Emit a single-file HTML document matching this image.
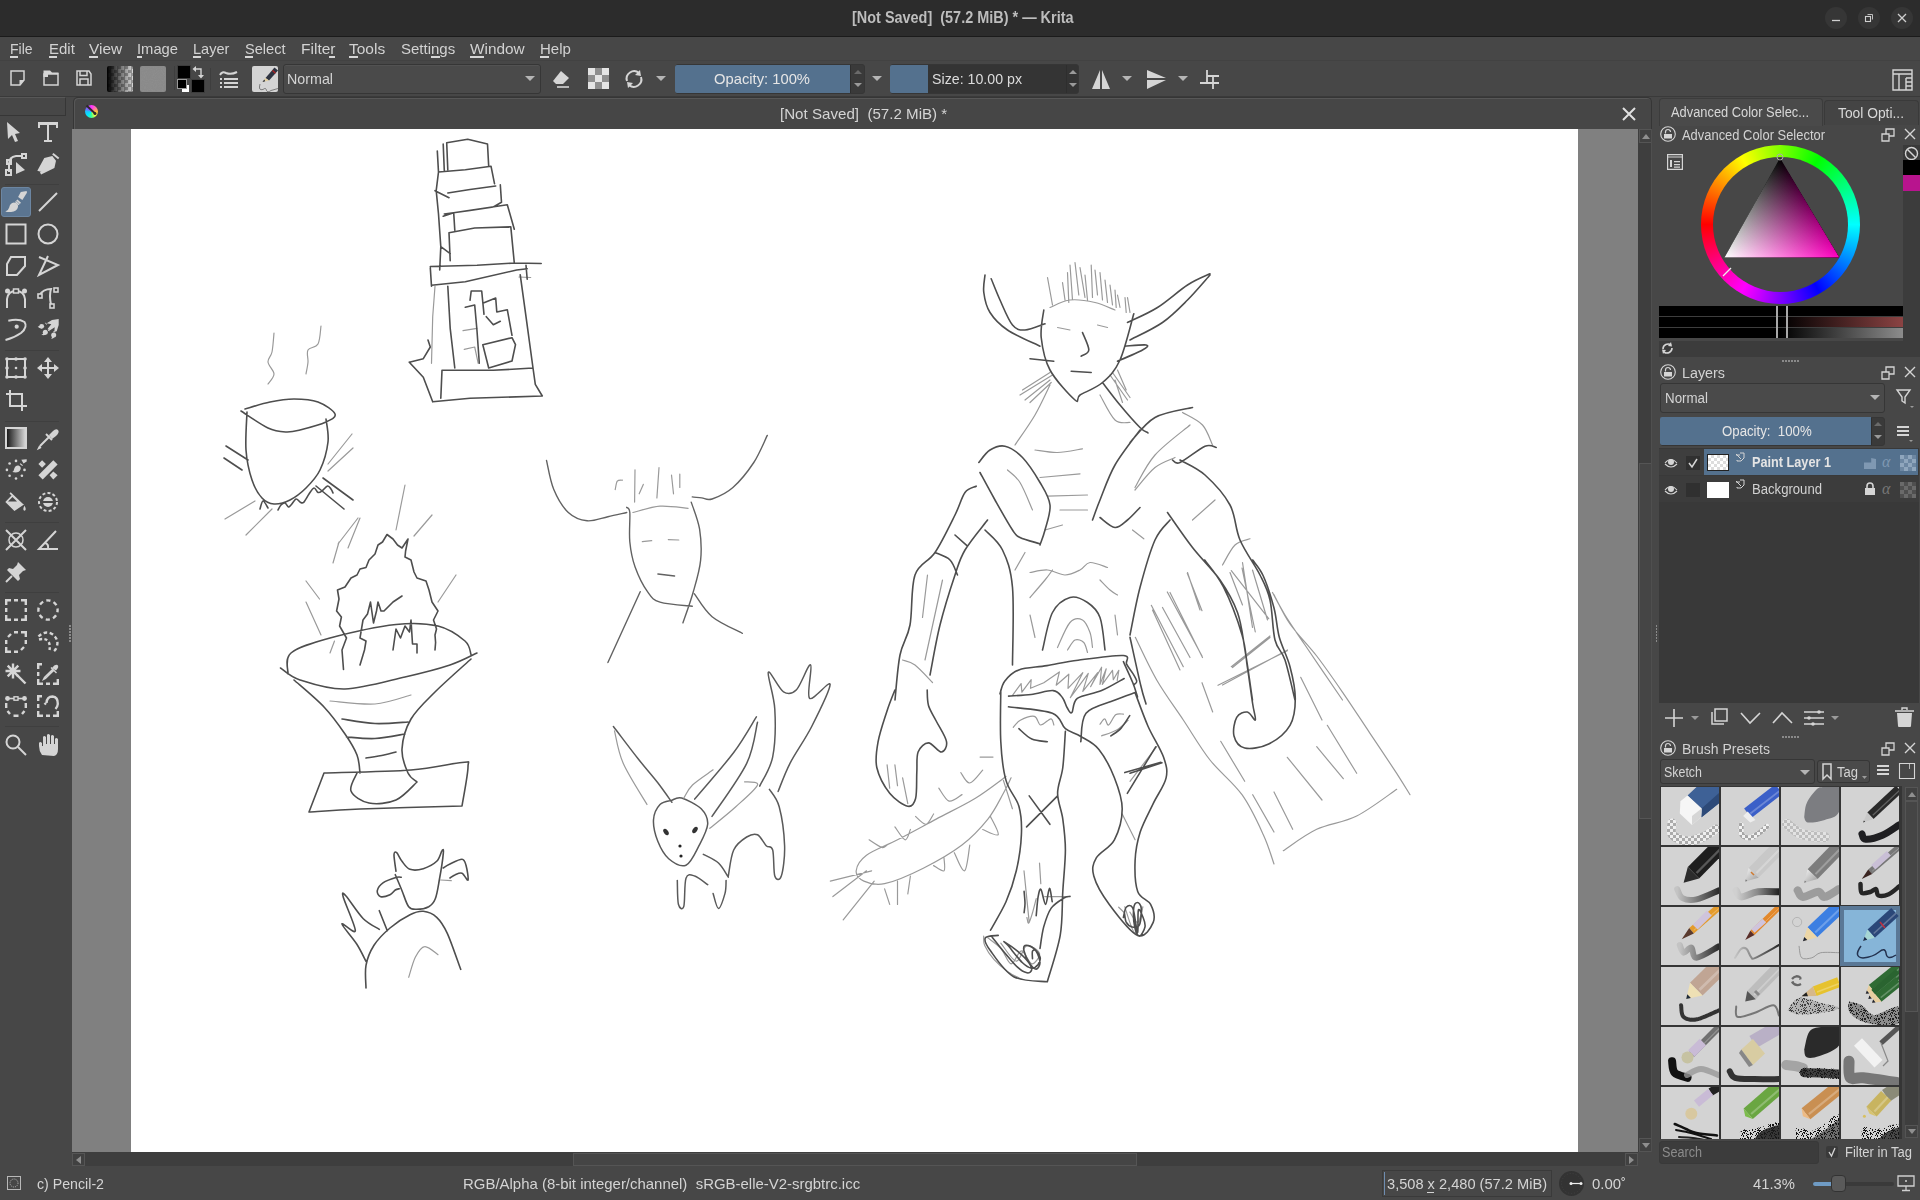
<!DOCTYPE html><html><head><meta charset="utf-8"><style>
*{box-sizing:border-box;margin:0;padding:0}
html,body{width:1920px;height:1200px;overflow:hidden;background:#474747;font-family:"Liberation Sans",sans-serif;color:#d2d2d2}
.a{position:absolute}
svg.a{overflow:visible}
.tx{position:absolute;white-space:nowrap;line-height:1;transform-origin:0 0}
</style></head><body><div class="a" style="left:0px;top:0px;width:1920px;height:36px;background:#2c2c2c;"></div><div class="a" style="left:0px;top:36px;width:1920px;height:1px;background:#1b1b1b;"></div><div class="tx" style="left:851.50px;top:9.66px;font-size:16px;color:#bdbdbd;font-weight:700;transform:scaleX(0.9027);">[Not Saved]&nbsp; (57.2 MiB) * — Krita</div><div class="a" style="left:1825px;top:7px;width:22px;height:22px;border-radius:11px;background:#363636"></div><div class="a" style="left:1858px;top:7px;width:22px;height:22px;border-radius:11px;background:#363636"></div><div class="a" style="left:1891px;top:7px;width:22px;height:22px;border-radius:11px;background:#363636"></div><svg class="a" style="left:1828px;top:10px" width="16" height="16" viewBox="0 0 16 16"><path stroke="#cfcfcf" stroke-width="1.3" d="M4 10.5 H12"/></svg><svg class="a" style="left:1861px;top:10px" width="16" height="16" viewBox="0 0 16 16"><rect x="4.5" y="6.5" width="5" height="5" fill="none" stroke="#cfcfcf" stroke-width="1.1"/><path fill="none" stroke="#cfcfcf" stroke-width="0.9" d="M6.5 4.5 H11.5 V9.5"/></svg><svg class="a" style="left:1894px;top:10px" width="16" height="16" viewBox="0 0 16 16"><path stroke="#cfcfcf" stroke-width="1.3" d="M4 4 L12 12 M12 4 L4 12"/></svg><div class="tx" style="left:10.40px;top:42.36px;font-size:14.1px;color:#d2d2d2;font-weight:400;transform:scaleX(0.9948);">File</div><div class="a" style="left:10.4px;top:56px;width:8.1px;height:2px;background:#d6d6d6;"></div><div class="tx" style="left:48.70px;top:42.36px;font-size:14.1px;color:#d2d2d2;font-weight:400;transform:scaleX(1.0619);">Edit</div><div class="a" style="left:48.5px;top:56px;width:8.0px;height:2px;background:#d6d6d6;"></div><div class="tx" style="left:88.90px;top:42.36px;font-size:14.1px;color:#d2d2d2;font-weight:400;transform:scaleX(1.0958);">View</div><div class="a" style="left:88.9px;top:56px;width:8.899999999999991px;height:2px;background:#d6d6d6;"></div><div class="tx" style="left:137.10px;top:42.36px;font-size:14.1px;color:#d2d2d2;font-weight:400;transform:scaleX(1.0467);">Image</div><div class="a" style="left:137px;top:56px;width:4.5px;height:2px;background:#d6d6d6;"></div><div class="tx" style="left:193.10px;top:42.36px;font-size:14.1px;color:#d2d2d2;font-weight:400;transform:scaleX(1.0322);">Layer</div><div class="a" style="left:193px;top:56px;width:7.5px;height:2px;background:#d6d6d6;"></div><div class="tx" style="left:244.50px;top:42.36px;font-size:14.1px;color:#d2d2d2;font-weight:400;transform:scaleX(1.0365);">Select</div><div class="a" style="left:244.5px;top:56px;width:8.0px;height:2px;background:#d6d6d6;"></div><div class="tx" style="left:300.50px;top:42.36px;font-size:14.1px;color:#d2d2d2;font-weight:400;transform:scaleX(1.1012);">Filter</div><div class="a" style="left:329px;top:56px;width:6px;height:2px;background:#d6d6d6;"></div><div class="tx" style="left:349.30px;top:42.36px;font-size:14.1px;color:#d2d2d2;font-weight:400;transform:scaleX(1.1001);">Tools</div><div class="a" style="left:349px;top:56px;width:9px;height:2px;background:#d6d6d6;"></div><div class="tx" style="left:400.80px;top:42.36px;font-size:14.1px;color:#d2d2d2;font-weight:400;transform:scaleX(1.0640);">Settings</div><div class="a" style="left:431.4px;top:56px;width:8.600000000000023px;height:2px;background:#d6d6d6;"></div><div class="tx" style="left:470.40px;top:42.36px;font-size:14.1px;color:#d2d2d2;font-weight:400;transform:scaleX(1.0909);">Window</div><div class="a" style="left:470.4px;top:56px;width:14.100000000000023px;height:2px;background:#d6d6d6;"></div><div class="tx" style="left:540.10px;top:42.36px;font-size:14.1px;color:#d2d2d2;font-weight:400;transform:scaleX(1.0655);">Help</div><div class="a" style="left:540px;top:56px;width:9px;height:2px;background:#d6d6d6;"></div><div class="a" style="left:0px;top:60px;width:1920px;height:1px;background:#424242;"></div><div class="a" style="left:0px;top:96px;width:1920px;height:1px;background:#3a3a3a;"></div><svg class="a" style="left:10px;top:70px" width="16" height="16" viewBox="0 0 16 16"><path fill="none" stroke="#d5d5d5" stroke-width="1.5" d="M1 1 H14 V10 L10 15 H1 Z"/><path fill="#d5d5d5" d="M9.5 15 L14.5 10 H9.5 Z"/></svg><svg class="a" style="left:43px;top:70px" width="16" height="16" viewBox="0 0 16 16"><path fill="none" stroke="#d5d5d5" stroke-width="1.5" d="M1 4 H15 V15 H1 Z"/><path fill="#d5d5d5" d="M0.5 0.5 H7 L9 2.5 H15.5 V4 H5 V7 H0.5 Z"/></svg><svg class="a" style="left:76px;top:70px" width="16" height="16" viewBox="0 0 16 16"><path fill="none" stroke="#d5d5d5" stroke-width="1.5" d="M1 1 H13 L15 4 V15 H1 Z M4 1 V5.5 H11 V1 M4 15 V9 H12 V15"/></svg><div class="a" style="left:107px;top:66px;width:26px;height:26px;border-radius:2px;background:linear-gradient(90deg,#000 0%,rgba(0,0,0,0) 100%),repeating-conic-gradient(#9a9a9a 0 25%,#d8d8d8 0 50%) 0 0/7px 7px"></div><div class="a" style="left:140px;top:66px;width:26px;height:26px;background:#8a8a8a;border-radius:2px"></div><svg class="a" style="left:140px;top:66px" width="26" height="26" viewBox="0 0 26 26"><defs><filter id="nz" x="0" y="0" width="100%" height="100%" color-interpolation-filters="sRGB"><feTurbulence type="fractalNoise" baseFrequency="0.9" numOctaves="2" seed="3"/><feColorMatrix values="0 0 0 0 0.6  0 0 0 0 0.6  0 0 0 0 0.6  1.0 0 0 0 -0.4"/></filter></defs><rect x="1" y="1" width="24" height="24" fill="#8a8a8a" filter="url(#nz)" opacity="0.7"/></svg><div class="a" style="left:174px;top:66px;width:1px;height:24px;background:#3e3e3e;"></div><div class="a" style="left:178px;top:66px;width:12px;height:12px;background:#000;box-shadow:0 0 0 1px #3c3c3c"></div><div class="a" style="left:192px;top:80px;width:12px;height:12px;background:#000;box-shadow:0 0 0 1px #3c3c3c"></div><div class="a" style="left:182px;top:85px;width:7px;height:7px;background:#fff;"></div><div class="a" style="left:178px;top:80px;width:8px;height:8px;background:#000;box-shadow:0 0 0 1px #9a9a9a"></div><svg class="a" style="left:192px;top:66px" width="12" height="13" viewBox="0 0 12 13"><path fill="none" stroke="#d5d5d5" stroke-width="1.4" d="M3 3 H9 V10"/><path fill="#d5d5d5" d="M0.5 3 L4 0 V6 Z M9 12.5 L6 9 H12 Z"/></svg><div class="a" style="left:210px;top:68px;width:1px;height:22px;background:#3e3e3e;"></div><svg class="a" style="left:219px;top:70px" width="20" height="20" viewBox="0 0 20 20"><path fill="none" stroke="#d5d5d5" stroke-width="2" d="M1 5 Q3 1 7 3 Q12 5 18 2"/><g fill="#d5d5d5"><rect x="1" y="8" width="2" height="2"/><rect x="5" y="8" width="14" height="2"/><rect x="1" y="12" width="2" height="2"/><rect x="5" y="12" width="14" height="2"/><rect x="1" y="16" width="2" height="2"/><rect x="5" y="16" width="14" height="2"/></g></svg><div class="a" style="left:252px;top:66px;width:26px;height:26px;border-radius:2px;background:#d4d4d4"></div><svg class="a" style="left:252px;top:66px" width="26" height="26" viewBox="0 0 26 26"><path d="M13.5 12 L22.5 1.5 L26 4.5 L17 14.5 Z" fill="#2f3441"/><path d="M13.5 12 L17 14.5 L10.5 16 Z" fill="#e2cfa0"/><path d="M10.5 16 L12.2 13.6 L13.2 15.3 Z" fill="#1d2333"/><path d="M20.5 4.5 L23.5 7.2" stroke="#b52020" stroke-width="1.2"/><path d="M8 18 Q6 25 11 23.5 Q14 21 14.5 24.5 Q15.5 27 19 24.5 L26 22.5" fill="none" stroke="#555" stroke-width="0.7"/></svg><div class="a" style="left:283px;top:64px;width:258px;height:30px;border-radius:3px;background:#4a4a4a;border:1px solid #363636;box-shadow:inset 0 1px 0 #525252"></div><div class="tx" style="left:287.00px;top:72.40px;font-size:14.3px;color:#d4d4d4;font-weight:400;transform:scaleX(0.9983);">Normal</div><svg class="a" style="left:525px;top:76px" width="10" height="6" viewBox="0 0 10 6"><path fill="#b5b5b5" d="M0 0 H10 L5 5 Z"/></svg><svg class="a" style="left:552px;top:70px" width="18" height="18" viewBox="0 0 18 18"><path fill="#d5d5d5" d="M9 1 L17 8 L11 14 L4 14 L1 11 Z"/><path fill="#474747" d="M3 11 L8 6 L11 9 L8 12 L5 12 Z" opacity="0"/><path stroke="#d5d5d5" stroke-width="1.6" d="M5 17 H17"/></svg><div class="a" style="left:588px;top:68px;width:21px;height:21px;background:repeating-conic-gradient(#8e8e8e 0 25%,#e4e4e4 0 50%) 0 0/14px 14px"></div><svg class="a" style="left:624px;top:69px" width="20" height="20" viewBox="0 0 20 20"><path fill="none" stroke="#d5d5d5" stroke-width="2" d="M3 12 A7.5 7.5 0 0 1 15 4 M17 8 A7.5 7.5 0 0 1 5 16"/><path fill="#d5d5d5" d="M16 1 L17 7 L11 6 Z M4 19 L3 13 L9 14 Z"/></svg><svg class="a" style="left:656px;top:76px" width="10" height="6" viewBox="0 0 10 6"><path fill="#b5b5b5" d="M0 0 H10 L5 5 Z"/></svg><div class="a" style="left:675px;top:64px;width:190px;height:30px;border-radius:3px;background:#3a3a3a;border:1px solid #363636"></div><div class="a" style="left:675px;top:65px;width:175px;height:28px;background:#54718e;border-radius:2px 0 0 2px"></div><div class="a" style="left:850px;top:65px;width:1px;height:28px;background:#2e2e2e;"></div><svg class="a" style="left:853px;top:69px" width="10" height="20" viewBox="0 0 10 20"><path fill="#6a6a6a" d="M1 5 L5 1 L9 5 Z"/><path fill="#9a9a9a" d="M1 14 L5 18 L9 14 Z"/></svg><div class="tx" style="left:714.00px;top:72.40px;font-size:14.3px;color:#e6e6e6;font-weight:400;transform:scaleX(1.0324);">Opacity: 100%</div><svg class="a" style="left:872px;top:76px" width="10" height="6" viewBox="0 0 10 6"><path fill="#b5b5b5" d="M0 0 H10 L5 5 Z"/></svg><div class="a" style="left:890px;top:64px;width:189px;height:30px;border-radius:3px;background:#343434;border:1px solid #363636"></div><div class="a" style="left:890px;top:65px;width:38px;height:28px;background:#54718e;border-radius:2px 0 0 2px"></div><div class="a" style="left:1066px;top:65px;width:1px;height:28px;background:#2e2e2e;"></div><svg class="a" style="left:1068px;top:69px" width="10" height="20" viewBox="0 0 10 20"><path fill="#9a9a9a" d="M1 5 L5 1 L9 5 Z"/><path fill="#9a9a9a" d="M1 14 L5 18 L9 14 Z"/></svg><div class="tx" style="left:932.00px;top:72.40px;font-size:14.3px;color:#dcdcdc;font-weight:400;transform:scaleX(0.9933);">Size: 10.00 px</div><svg class="a" style="left:1091px;top:69px" width="20" height="21" viewBox="0 0 20 21"><path fill="#d5d5d5" d="M9 1 V20 H1 Z M11 1 V20 H19 Z"/></svg><svg class="a" style="left:1122px;top:76px" width="10" height="6" viewBox="0 0 10 6"><path fill="#b5b5b5" d="M0 0 H10 L5 5 Z"/></svg><svg class="a" style="left:1146px;top:69px" width="21" height="21" viewBox="0 0 21 21"><path fill="#d5d5d5" d="M1 1 L20 9 H1 Z M1 11 H20 L1 20 Z"/></svg><svg class="a" style="left:1178px;top:76px" width="10" height="6" viewBox="0 0 10 6"><path fill="#b5b5b5" d="M0 0 H10 L5 5 Z"/></svg><svg class="a" style="left:1199px;top:69px" width="21" height="21" viewBox="0 0 21 21"><path fill="none" stroke="#d5d5d5" stroke-width="1.8" d="M1 14 H20 M8 1 V14 M8 7 H20 V7 M14 7 V20"/></svg><svg class="a" style="left:1892px;top:69px" width="21" height="22" viewBox="0 0 21 22"><path fill="none" stroke="#d5d5d5" stroke-width="1.4" d="M1 1 H20 V21 H1 Z M1 5 H20 M7 5 V21 M14 9 H20 M14 13 H20 M14 17 H20 M14 9 V21"/></svg><div class="a" style="left:0px;top:97px;width:66px;height:19px;background:#474747;border:1px solid #363636;border-left:none;border-top-color:#575757"></div><div class="a" style="left:1px;top:187px;width:30px;height:30px;background:#5b7591;border-radius:3px;border:1px solid #6c86a2"></div><svg class="a" style="left:5px;top:121px" width="22" height="22" viewBox="0 0 22 22"><path fill="#d5d5d5" d="M2 1 L15 12 L10 13 L13 20 L10 21 L7 14 L3 18 Z"/></svg><svg class="a" style="left:37px;top:121px" width="22" height="22" viewBox="0 0 22 22"><path fill="#d5d5d5" d="M1 1 H21 V7 H19 V4 H12 V19 H15 V21 H7 V19 H10 V4 H3 V7 H1 Z"/></svg><svg class="a" style="left:5px;top:153px" width="22" height="22" viewBox="0 0 22 22"><path fill="none" stroke="#d5d5d5" stroke-width="2" d="M4 19 V11 Q4 4 11 3 H17" /><rect x="1" y="17" width="5" height="5" fill="none" stroke="#d5d5d5" stroke-width="2" stroke-width="1.6"/><rect x="2" y="7" width="4" height="4" fill="none" stroke="#d5d5d5" stroke-width="2" stroke-width="1.6"/><rect x="17" y="1" width="4" height="4" fill="none" stroke="#d5d5d5" stroke-width="2" stroke-width="1.6"/><path fill="#d5d5d5" d="M11 9 L20 17 L11 21 Z"/></svg><svg class="a" style="left:37px;top:153px" width="22" height="22" viewBox="0 0 22 22"><path fill="#d5d5d5" d="M0.3 17.8 L7.3 5 L15.3 2.9 L19 7.7 L17.4 15.1 L4.1 21.5 L3 19.5 L9.2 12.6 Q8 11 9.9 9.8 Q11.6 10.6 10.8 12.5 L4.5 19 Z"/><path fill="none" stroke="#d5d5d5" stroke-width="2" d="M15.8 0.7 L21.7 5.5"/></svg><svg class="a" style="left:5px;top:191px" width="22" height="22" viewBox="0 0 22 22"><path fill="#d5d5d5" d="M13.1 5.9 L15.8 1.1 L21.7 0.1 L21.9 1.7 L17.4 9.1 Z"/><path fill="#d5d5d5" d="M11.2 9.6 L12.4 8.4 L16 11.8 L14.8 13 Z M10 11 L11 10 L14.5 13.3 L13.5 14.3 Z"/><path fill="#d5d5d5" d="M0.3 20.5 Q3.5 19.5 4.2 16.5 Q5 12 9 11.5 Q13.5 11.8 13 16 Q12 20.5 6 21 Q2.5 21.3 0.3 20.5 Z"/></svg><svg class="a" style="left:37px;top:191px" width="22" height="22" viewBox="0 0 22 22"><path fill="none" stroke="#d5d5d5" stroke-width="2" d="M2 20 L20 2"/></svg><svg class="a" style="left:5px;top:223px" width="22" height="22" viewBox="0 0 22 22"><rect x="1.5" y="1.5" width="19" height="19" fill="none" stroke="#d5d5d5" stroke-width="2"/></svg><svg class="a" style="left:37px;top:223px" width="22" height="22" viewBox="0 0 22 22"><circle cx="11" cy="11" r="9.5" fill="none" stroke="#d5d5d5" stroke-width="2"/></svg><svg class="a" style="left:5px;top:255px" width="22" height="22" viewBox="0 0 22 22"><path fill="none" stroke="#d5d5d5" stroke-width="2" d="M6 2 H20 V11 L12 20 H2 V9 Z"/></svg><svg class="a" style="left:37px;top:255px" width="22" height="22" viewBox="0 0 22 22"><path fill="none" stroke="#d5d5d5" stroke-width="2" d="M2 2 L21 10 L2 20 L11 1"/></svg><svg class="a" style="left:5px;top:287px" width="22" height="22" viewBox="0 0 22 22"><path fill="none" stroke="#d5d5d5" stroke-width="2" d="M2 21 V12 Q3 4 11 4 Q19 4 20 12 V21"/><circle cx="2.5" cy="4" r="2.5" fill="#d5d5d5"/><circle cx="19.5" cy="4" r="2.5" fill="#d5d5d5"/><rect x="8.5" y="2" width="5" height="4" fill="#474747" stroke="#d5d5d5" stroke-width="1.5"/></svg><svg class="a" style="left:37px;top:287px" width="22" height="22" viewBox="0 0 22 22"><path fill="none" stroke="#d5d5d5" stroke-width="2" d="M3 8 Q6 2 14 2 Q12 8 14 18"/><rect x="1" y="7" width="4" height="4" fill="#474747" stroke="#d5d5d5" stroke-width="1.6"/><rect x="17" y="1" width="4" height="4" fill="#474747" stroke="#d5d5d5" stroke-width="1.6"/><rect x="13" y="17" width="4" height="4" fill="#474747" stroke="#d5d5d5" stroke-width="1.6"/></svg><svg class="a" style="left:5px;top:319px" width="22" height="22" viewBox="0 0 22 22"><path fill="none" stroke="#d5d5d5" stroke-width="2" stroke-width="2.2" d="M3.3 1.7 Q14 -0.5 19.5 3 Q23 8 16 14 Q9 19 0.5 21"/><circle cx="11.7" cy="7.7" r="2.1" fill="#d5d5d5"/></svg><svg class="a" style="left:37px;top:319px" width="22" height="22" viewBox="0 0 22 22"><path fill="#d5d5d5" d="M21.7 0 L15 1 L9.7 4.3 L14.3 5.3 L10.7 9.7 L12.3 11.7 L17.7 8.3 L17.3 12.7 L19.7 12.3 L21.7 6 Z"/><circle cx="4.7" cy="7.3" r="2.4" fill="#d5d5d5"/><path fill="#d5d5d5" d="M0.7 7.7 Q3 7 4 5.5 L5 9.5 Q2 9.5 0.7 7.7 Z"/><circle cx="8.3" cy="13.3" r="2.5" fill="#d5d5d5"/><path fill="#d5d5d5" d="M4.3 15.7 Q6.5 15 7 12.5 L9 15.5 Q6.5 16.7 4.3 15.7 Z"/><circle cx="16.7" cy="15.9" r="2.5" fill="#d5d5d5"/><path fill="#d5d5d5" d="M14.3 19.9 Q15.5 17.5 14.5 15.5 L17.5 18 Q16.5 19.8 14.3 19.9 Z"/><path stroke="#d5d5d5" stroke-width="1" d="M8.5 3.8 L9.5 5.5 M11 10.8 L12.3 12.2 M16.3 12.8 L18.3 12.8"/></svg><svg class="a" style="left:5px;top:357px" width="22" height="22" viewBox="0 0 22 22"><rect x="2" y="2" width="18" height="18" fill="none" stroke="#d5d5d5" stroke-width="2"/><circle cx="11" cy="11" r="1.3" fill="#d5d5d5"/><g fill="#d5d5d5"><circle cx="2" cy="2" r="1.8"/><circle cx="11" cy="2" r="1.8"/><circle cx="20" cy="2" r="1.8"/><circle cx="2" cy="11" r="1.8"/><circle cx="20" cy="11" r="1.8"/><circle cx="2" cy="20" r="1.8"/><circle cx="11" cy="20" r="1.8"/><circle cx="20" cy="20" r="1.8"/></g></svg><svg class="a" style="left:37px;top:357px" width="22" height="22" viewBox="0 0 22 22"><path fill="none" stroke="#d5d5d5" stroke-width="2" d="M11 2 V20 M2 11 H20"/><path fill="#d5d5d5" d="M11 0 L15 5 H7 Z M11 22 L15 17 H7 Z M0 11 L5 7 V15 Z M22 11 L17 7 V15 Z"/></svg><svg class="a" style="left:5px;top:389px" width="22" height="22" viewBox="0 0 22 22"><path fill="none" stroke="#d5d5d5" stroke-width="2" d="M5 1 V17 H22 M1 5 H17 V22"/></svg><svg class="a" style="left:5px;top:427px" width="22" height="22" viewBox="0 0 22 22"><defs><linearGradient id="gr1"><stop offset="0" stop-color="#111"/><stop offset="1" stop-color="#ddd"/></linearGradient></defs><rect x="1" y="1" width="20" height="20" fill="url(#gr1)" stroke="#d5d5d5" stroke-width="2"/></svg><svg class="a" style="left:37px;top:427px" width="22" height="22" viewBox="0 0 22 22"><path fill="none" stroke="#d5d5d5" stroke-width="2" d="M3 19 L13 9 M9 7 L15 13"/><path fill="#d5d5d5" d="M12 8 L16 4 Q19 1 21 3 Q23 5 19 9 L15 12 Z"/><path fill="none" stroke="#d5d5d5" stroke-width="2" stroke-width="1.6" d="M3 19 L2 21 L4 20"/></svg><svg class="a" style="left:5px;top:459px" width="22" height="22" viewBox="0 0 22 22"><path fill="#d5d5d5" d="M16.3 0.8 L21.7 0.3 L21.7 2.4 L18.5 4.5 Z M14.7 5 L15.5 4.2 L18 6.2 L17.2 7 Z"/><path fill="#d5d5d5" d="M7.3 13 Q9 12 9.3 9.5 Q10.5 6 13.5 6.5 Q16.5 7.5 15.5 10.5 Q14.5 13.5 10.5 13.5 Z"/><g fill="#d5d5d5"><circle cx="11" cy="1.9" r="1.3"/><circle cx="4.6" cy="4.5" r="1.3"/><circle cx="1.9" cy="10.9" r="1.3"/><circle cx="4.6" cy="16.8" r="1.3"/><circle cx="11" cy="19.5" r="1.3"/><circle cx="16.9" cy="16.8" r="1.3"/><circle cx="19.5" cy="10.9" r="1.3"/></g></svg><svg class="a" style="left:37px;top:459px" width="22" height="22" viewBox="0 0 22 22"><path fill="#d5d5d5" d="M1.4 16.3 L5.7 20.5 L20.6 5.6 L16.3 1.3 Z M1.4 5.1 L5.1 1.3 L8.9 5.1 L5.1 8.8 Z M12.6 16.3 L16.3 12.5 L20.6 16.3 L16.3 20.5 Z"/></svg><svg class="a" style="left:5px;top:491px" width="22" height="22" viewBox="0 0 22 22"><path fill="#d5d5d5" d="M0.3 10.9 L9.4 20 L19 13.6 L17.5 12.5 L5.7 1.3 L4.5 2.5 L6.5 4.5 Z"/><path fill="#474747" d="M3 10.5 L12 10.5 L7.5 6 Z"/><path fill="#d5d5d5" d="M19.5 14.5 Q21 17.5 20.5 19 Q19.5 20.5 18.5 19 Q18 17.5 19.5 14.5 Z"/></svg><svg class="a" style="left:37px;top:491px" width="22" height="22" viewBox="0 0 22 22"><circle cx="11" cy="11" r="9" fill="none" stroke="#d5d5d5" stroke-width="2" stroke-dasharray="3 2.2"/><circle cx="11" cy="11" r="5" fill="#d5d5d5"/><rect x="6" y="10" width="10" height="2" fill="#474747"/></svg><svg class="a" style="left:5px;top:529px" width="22" height="22" viewBox="0 0 22 22"><path fill="none" stroke="#d5d5d5" stroke-width="2" d="M1 1 L21 21 M21 1 L1 21"/><circle cx="11" cy="11" r="7" fill="none" stroke="#d5d5d5" stroke-width="1.5"/></svg><svg class="a" style="left:37px;top:529px" width="22" height="22" viewBox="0 0 22 22"><path fill="none" stroke="#d5d5d5" stroke-width="2" d="M19 2 L2 20 H21"/><path fill="none" stroke="#d5d5d5" stroke-width="2" stroke-width="1.5" d="M8 14 Q12 15 11 20"/></svg><svg class="a" style="left:5px;top:561px" width="22" height="22" viewBox="0 0 22 22"><path fill="#d5d5d5" d="M13 1 L21 9 L18 10 L14 14 L15 18 L13 20 L2 9 L4 7 L8 8 L12 4 Z"/><path fill="none" stroke="#d5d5d5" stroke-width="2" d="M7 15 L1 21"/></svg><svg class="a" style="left:5px;top:599px" width="22" height="22" viewBox="0 0 22 22"><path fill="none" stroke="#d5d5d5" stroke-width="2.4" d="M1.2 6 V1.2 H6 M16 1.2 H20.8 V6 M1.2 16 V20.8 H6 M20.8 16 V20.8 H16 M9 1.2 H13 M9 20.8 H13 M1.2 9 V13 M20.8 9 V13"/></svg><svg class="a" style="left:37px;top:599px" width="22" height="22" viewBox="0 0 22 22"><circle cx="11" cy="11" r="9.6" fill="none" stroke="#d5d5d5" stroke-width="2.4" stroke-dasharray="4.2 3.34" stroke-dashoffset="2"/></svg><svg class="a" style="left:5px;top:631px" width="22" height="22" viewBox="0 0 22 22"><path fill="none" stroke="#d5d5d5" stroke-width="2.4" d="M16 1.2 H20.8 V6 M20.8 9 V13 M19 16 L16 19 M13 20.8 H9 M6 20.8 H1.2 V16 M1.2 13 V9 M3 6 L6 3 M9 1.2 H13"/></svg><svg class="a" style="left:37px;top:631px" width="22" height="22" viewBox="0 0 22 22"><path fill="none" stroke="#d5d5d5" stroke-width="2.4" stroke-dasharray="3.6 2.6" d="M1.5 5.5 Q8 -1 15 3 Q22 8 20 15 Q19 19 16 21"/><path fill="none" stroke="#d5d5d5" stroke-width="2.4" stroke-dasharray="3 2.4" d="M2 8.5 Q8 7 11 10 Q13.5 13 12.5 19"/></svg><svg class="a" style="left:5px;top:663px" width="22" height="22" viewBox="0 0 22 22"><path fill="none" stroke="#d5d5d5" stroke-width="2.4" d="M8 0.5 V15.5 M0.5 8 H15.5 M2.7 2.7 L13.3 13.3 M13.3 2.7 L2.7 13.3"/><circle cx="8" cy="8" r="3.2" fill="#d5d5d5"/><path fill="none" stroke="#d5d5d5" stroke-width="2.4" stroke-width="2.8" d="M12 12 L20.5 20.5"/></svg><svg class="a" style="left:37px;top:663px" width="22" height="22" viewBox="0 0 22 22"><path fill="none" stroke="#d5d5d5" stroke-width="2.4" d="M1.2 6 V1.2 H5 M1.2 9 V13 M1.2 16 V20.8 H6 M9 20.8 H13 M16 20.8 H20.8 V16"/><path fill="#d5d5d5" d="M15 5 Q18 0.5 20.5 2 Q22.5 4 19 7.5 Z"/><path fill="none" stroke="#d5d5d5" stroke-width="1.4" d="M14 4.5 L19.5 10 M16.8 7.2 L8.5 15.5 L6.5 16.5 L7.5 14.5 L15.8 6.2"/></svg><svg class="a" style="left:5px;top:695px" width="22" height="22" viewBox="0 0 22 22"><path fill="none" stroke="#d5d5d5" stroke-width="1.6" d="M2 3.5 H20"/><circle cx="2.5" cy="3.5" r="2.4" fill="#d5d5d5"/><circle cx="19.5" cy="3.5" r="2.4" fill="#d5d5d5"/><rect x="9" y="1.8" width="4" height="3.4" fill="#474747" stroke="#d5d5d5" stroke-width="1.4"/><path fill="none" stroke="#d5d5d5" stroke-width="2.4" d="M1.2 8 V13 M20.8 8 V13 M2.5 16 L5 19 M19.5 16 L17 19 M8.5 20.8 H13.5"/></svg><svg class="a" style="left:37px;top:695px" width="22" height="22" viewBox="0 0 22 22"><path fill="none" stroke="#d5d5d5" stroke-width="2.4" d="M1.2 6 V1.2 H5 M1.2 9 V13 M1.2 16 V20.8 H6 M9 20.8 H13 M16 20.8 H20.8 V16"/><path fill="none" stroke="#d5d5d5" stroke-width="2.4" d="M9.5 8 Q10 1.5 15.5 1.5 Q21 2 20.8 9 Q20.5 12 18.5 14"/><path fill="none" stroke="#d5d5d5" stroke-width="2.4" d="M7.5 9.5 L9 8"/></svg><svg class="a" style="left:5px;top:734px" width="22" height="22" viewBox="0 0 22 22"><circle cx="8" cy="8" r="6.5" fill="none" stroke="#d5d5d5" stroke-width="2" stroke-width="2.4"/><path fill="none" stroke="#d5d5d5" stroke-width="2" stroke-width="3" d="M13 13 L21 21"/></svg><svg class="a" style="left:37px;top:734px" width="22" height="22" viewBox="0 0 22 22"><path fill="#d5d5d5" d="M5 21 Q2 17 2 12 V9 Q3 7 5 9 V12 H6 V3 Q7 1 9 3 V10 H10 V1 Q11 -1 13 1 V10 H14 V2 Q15 0 17 2 V10 H18 V5 Q19 3 21 5 V15 Q21 21 17 22 Z"/></svg><div class="a" style="left:5px;top:184px;width:54px;height:1px;background:#3f3f3f;"></div><div class="a" style="left:5px;top:350px;width:54px;height:1px;background:#3f3f3f;"></div><div class="a" style="left:5px;top:421px;width:54px;height:1px;background:#3f3f3f;"></div><div class="a" style="left:5px;top:522px;width:54px;height:1px;background:#3f3f3f;"></div><div class="a" style="left:5px;top:592px;width:54px;height:1px;background:#3f3f3f;"></div><div class="a" style="left:5px;top:726px;width:54px;height:1px;background:#3f3f3f;"></div><div class="a" style="left:69px;top:625px;width:1.5px;height:1.5px;background:#8a8a8a;"></div><div class="a" style="left:69px;top:628px;width:1.5px;height:1.5px;background:#8a8a8a;"></div><div class="a" style="left:69px;top:631px;width:1.5px;height:1.5px;background:#8a8a8a;"></div><div class="a" style="left:69px;top:634px;width:1.5px;height:1.5px;background:#8a8a8a;"></div><div class="a" style="left:69px;top:637px;width:1.5px;height:1.5px;background:#8a8a8a;"></div><div class="a" style="left:69px;top:640px;width:1.5px;height:1.5px;background:#8a8a8a;"></div><div class="a" style="left:72px;top:97px;width:1580px;height:32px;background:#474747;"></div><div class="a" style="left:73px;top:97px;width:1579px;height:33px;border-radius:5px 5px 0 0;background:#464646;border:1px solid #363636;border-bottom:none;box-shadow:inset 1px 1px 0 #575757"></div><div class="a" style="left:85px;top:105px;width:13px;height:13px;border-radius:7px;background:conic-gradient(from 0deg,#ff30ff,#ff70b0,#ffc040,#f0ff40,#40ff90,#00e8ff,#20c0ff,#a040ff,#ff30ff)"></div><svg class="a" style="left:85px;top:104px" width="13" height="13" viewBox="0 0 13 13"><path d="M1.5 1.5 L10 9.5" stroke="#2a2a2a" stroke-width="2"/><circle cx="10" cy="9.5" r="1.5" fill="#2a2a2a"/></svg><div class="tx" style="left:780.00px;top:106.90px;font-size:14.3px;color:#d4d4d4;font-weight:400;transform:scaleX(1.0574);">[Not Saved]&nbsp; (57.2 MiB) *</div><svg class="a" style="left:1622px;top:107px" width="14" height="14" viewBox="0 0 14 14"><path stroke="#e0e0e0" stroke-width="2" d="M1 1 L13 13 M13 1 L1 13"/></svg><div class="a" style="left:72px;top:129px;width:1566px;height:1023px;background:#808080"></div><div class="a" style="left:131px;top:129px;width:1447px;height:1023px;background:#ffffff"></div><svg class="a" style="left:0;top:0" width="1920" height="1200" viewBox="0 0 1920 1200"><path d="M546.5 460.4 C547.7 465.3 550.1 480.9 553.8 489.6 C557.4 498.3 562.8 507.3 568.3 512.5 C573.9 517.7 580.5 520.1 587.1 520.8 C593.7 521.5 601.3 518.1 607.9 516.7 C614.5 515.3 623.5 513.2 626.7 512.5 M767.3 435.4 C765.0 439.9 759.5 453.8 753.8 462.5 C748.0 471.2 739.9 481.4 732.9 487.5 C726.0 493.6 717.3 497.2 712.1 499.0 C706.9 500.7 705.0 498.3 701.7 497.9 C698.4 497.6 693.9 497.0 692.3 496.9 M626.7 507.3 C627.2 508.2 629.3 506.8 629.8 512.5 C630.3 518.2 628.9 532.6 629.8 541.7 C630.7 550.7 632.0 558.3 635.0 566.7 C638.0 575.0 643.3 585.8 647.5 591.7 C651.7 597.6 652.5 599.7 660.0 602.1 C667.5 604.5 686.9 605.6 692.3 606.2 M691.2 502.1 C692.6 506.6 698.0 519.4 699.6 529.2 C701.1 538.9 701.7 550.0 700.6 560.4 C699.6 570.8 696.3 581.3 693.3 591.7 C690.4 602.1 684.7 617.7 682.9 622.9 M657.9 574.0 L674.6 576.0 M640.2 591.7 L607.9 662.5 M694.4 593.8 C697.3 597.6 704.1 610.1 712.1 616.7 C720.1 623.3 737.3 630.6 742.3 633.3" fill="none" stroke="#626262" stroke-width="1.4" stroke-linecap="round" stroke-linejoin="round"/><path d="M613.4 726.5 C617.6 731.9 630.9 749.6 638.3 759.0 C645.7 768.4 652.2 775.6 657.8 782.8 C663.4 790.1 669.6 799.1 671.9 802.3 M756.4 716.8 C752.6 722.7 744.0 738.8 733.7 752.5 C723.4 766.2 701.2 791.3 694.7 799.1 M757.5 722.2 C755.7 729.0 754.3 747.6 746.7 763.3 C739.1 779.1 717.8 807.6 712.0 816.4 M671.9 800.2 C669.9 800.9 663.1 801.3 660.0 804.5 C656.9 807.8 653.9 813.5 653.5 819.7 C653.1 825.8 655.3 834.8 657.8 841.3 C660.4 847.8 664.0 854.7 668.7 858.7 C673.4 862.7 681.0 867.4 686.0 865.2 C691.1 863.0 695.4 852.5 699.0 845.7 C702.6 838.8 707.3 830.2 707.7 824.0 C708.0 817.9 705.5 813.2 701.2 808.8 C696.8 804.5 686.5 799.5 681.7 798.0 C676.8 796.6 673.5 799.8 671.9 800.2 M759.7 786.1 C761.8 781.2 770.2 769.7 772.7 756.8 C775.2 744.0 775.6 723.3 774.8 709.2 C774.1 695.1 766.9 675.2 768.3 672.3 C769.8 669.4 778.8 688.9 783.5 691.8 C788.2 694.7 792.0 694.2 796.5 689.7 C801.0 685.2 808.4 663.3 810.6 664.8 C812.8 666.2 806.3 695.1 809.5 698.3 C812.8 701.6 829.7 679.6 830.1 684.3 C830.5 688.9 818.4 713.3 811.7 726.5 C805.0 739.7 795.6 752.5 790.0 763.3 C784.4 774.2 780.1 786.8 778.1 791.5 M769.4 789.3 C771.1 792.2 776.7 797.3 779.2 806.7 C781.7 816.1 784.2 834.1 784.6 845.7 C785.0 857.2 783.0 871.0 781.3 876.0 C779.7 881.1 776.3 880.4 774.8 876.0 C773.4 871.7 774.1 855.1 772.7 850.0 C771.2 845.0 768.7 848.2 766.2 845.7 C763.7 843.2 760.8 836.3 757.5 834.8 C754.3 833.4 750.7 834.5 746.7 837.0 C742.7 839.5 736.7 843.5 733.7 850.0 C730.6 856.5 729.2 871.7 728.3 876.0 M703.3 854.3 C705.9 855.8 714.4 859.2 718.5 863.0 C722.7 866.8 726.6 874.8 728.3 877.1 M677.3 880.4 C677.5 884.3 677.3 899.9 678.4 904.2 C679.5 908.5 682.6 910.7 683.8 906.4 C685.1 902.0 684.2 883.2 686.0 878.2 C687.8 873.1 691.1 874.9 694.7 876.0 C698.3 877.1 705.5 883.2 707.7 884.7 M713.1 893.4 C714.0 895.9 716.5 908.5 718.5 908.5 C720.5 908.5 723.7 898.0 725.0 893.4 C726.3 888.7 725.9 882.5 726.1 880.4" fill="none" stroke="#5a5a5a" stroke-width="1.5" stroke-linecap="round" stroke-linejoin="round"/><path d="M435.0 286.3 L432.7 316.7 L431.5 363.3 M463.0 330.7 L477.0 328.3 M464.2 349.3 L474.7 347.0 L478.2 363.3 M519.0 277.0 L530.7 277.5 M274.0 333.0 C273.7 336.2 273.0 347.2 272.0 352.0 C271.0 356.8 267.7 358.3 268.0 362.0 C268.3 365.7 274.0 370.3 274.0 374.0 C274.0 377.7 269.0 382.3 268.0 384.0 M321.0 326.0 C320.5 329.0 320.2 340.0 318.0 344.0 C315.8 348.0 309.7 347.0 308.0 350.0 C306.3 353.0 308.3 358.0 308.0 362.0 C307.7 366.0 306.3 372.0 306.0 374.0 M328.0 464.0 L352.0 434.0 M328.0 471.0 L353.0 448.0 M225.0 519.0 L255.0 501.0 M246.0 535.0 L272.0 509.0 M338.0 544.0 L358.0 518.0 M330.0 701.0 C337.5 701.5 361.5 705.0 375.0 704.0 C388.5 703.0 405.0 696.5 411.0 695.0 M405.0 485.0 L396.0 530.0 M432.0 515.0 L414.0 536.0 M360.0 518.0 L348.0 548.0 M339.0 542.0 L333.0 563.0 M306.0 581.0 L319.5 599.0 M306.0 602.0 L321.0 635.0 M456.0 575.0 L438.0 602.0 M330.0 653.0 L334.5 641.0 M408.7 977.3 C409.8 974.0 412.7 962.4 415.3 957.3 C418.0 952.2 420.9 947.1 424.7 946.7 C428.4 946.2 435.8 953.3 438.0 954.7 M440.7 880.0 L451.3 880.7 M632.9 512.5 C637.4 511.5 650.8 506.9 660.0 506.2 C669.2 505.6 683.4 508.0 688.1 508.3 M635.0 469.8 L634.6 502.1 M659.0 467.7 L656.9 497.9 M671.5 475.0 L673.5 493.8 M679.8 474.0 L679.8 487.5 M615.2 489.6 C615.6 488.2 616.1 482.8 617.3 481.2 C618.5 479.7 621.6 480.4 622.5 480.2 M639.2 493.8 L643.3 484.4 M642.3 541.7 L651.7 540.6 M668.3 539.6 L678.8 540.0 M614.5 730.8 C615.9 736.3 617.8 751.1 623.2 763.3 C628.6 775.6 643.0 797.7 647.0 804.5 M709.8 828.3 C714.2 824.7 727.9 813.9 735.8 806.7 C743.8 799.5 756.1 789.2 757.5 785.0 C759.0 780.9 746.7 782.3 744.5 781.8 M683.8 798.0 C685.3 795.8 687.6 789.7 692.5 785.0 C697.4 780.3 709.7 772.4 713.1 769.8 M1050.0 307.5 C1053.3 306.2 1062.5 300.8 1070.0 300.0 C1077.5 299.2 1087.5 300.8 1095.0 302.5 C1102.5 304.2 1111.7 308.8 1115.0 310.0 M1047.5 277.5 L1052.5 305.0 M1070.0 265.0 L1072.5 300.0 M1075.0 262.5 L1078.8 295.0 M1085.0 275.0 L1087.5 300.0 M1095.0 270.0 L1097.5 295.0 M1105.0 280.0 L1107.5 302.5 M1115.0 290.0 L1116.2 307.5 M1125.0 297.5 L1126.2 312.5 M1067.5 272.5 L1068.8 302.5 M1022.5 390.0 L1050.0 372.5 M1030.0 402.5 L1051.2 382.5 M1112.5 372.5 L1130.0 397.5 M1117.5 370.0 L1126.2 390.0 M1080.0 267.5 L1085.0 297.5 M1091.2 265.0 L1092.5 297.5 M1100.0 272.5 L1102.5 300.0 M1110.0 285.0 L1112.5 305.0 M1117.5 295.0 L1120.0 307.5 M1127.5 297.5 L1130.0 312.5 M1062.5 282.5 L1065.0 300.0 M1057.5 327.5 L1070.0 330.0 M1097.5 325.0 L1107.5 327.5 M1020.0 395.0 L1052.5 375.0 M1025.0 400.0 L1050.0 380.0 M1110.0 375.0 L1127.5 400.0 M1115.0 380.0 L1122.5 402.5 M1050.0 385.0 C1047.5 390.0 1040.8 405.0 1035.0 415.0 C1029.2 425.0 1018.3 440.0 1015.0 445.0 M1100.0 395.0 C1102.5 399.2 1110.0 415.4 1115.0 420.0 C1120.0 424.6 1127.5 422.1 1130.0 422.5 M1135.0 487.5 C1138.3 482.1 1145.8 465.4 1155.0 455.0 C1164.2 444.6 1184.2 430.0 1190.0 425.0 M902.5 660.0 C904.6 660.8 910.0 661.2 915.0 665.0 C920.0 668.8 929.6 679.6 932.5 682.5 M927.5 575.0 L922.5 617.5 M942.5 580.0 L925.0 660.0 M1007.5 470.0 C1009.6 472.1 1015.8 475.8 1020.0 482.5 C1024.2 489.2 1030.4 505.4 1032.5 510.0 M1025.0 552.5 L1015.0 570.0 M1035.0 450.0 C1038.8 450.4 1049.6 452.7 1057.5 452.5 C1065.4 452.3 1078.3 449.4 1082.5 448.8 M1040.0 477.5 L1080.0 473.8 M1047.5 496.2 L1087.5 495.0 M1060.0 510.0 L1087.5 510.0 M1045.0 530.0 L1062.5 525.0 M1030.0 572.5 C1032.9 572.1 1041.7 569.6 1047.5 570.0 C1053.3 570.4 1059.6 575.0 1065.0 575.0 C1070.4 575.0 1075.8 572.1 1080.0 570.0 C1084.2 567.9 1085.4 562.9 1090.0 562.5 C1094.6 562.1 1104.6 566.7 1107.5 567.5 M1030.0 597.5 C1032.5 594.6 1041.2 584.6 1045.0 580.0 C1048.8 575.4 1051.2 571.7 1052.5 570.0 M1100.0 580.0 C1101.7 581.7 1107.1 587.5 1110.0 590.0 C1112.9 592.5 1116.2 594.2 1117.5 595.0 M1057.5 647.5 C1059.6 643.3 1065.8 627.1 1070.0 622.5 C1074.2 617.9 1079.2 618.3 1082.5 620.0 C1085.8 621.7 1088.3 627.9 1090.0 632.5 C1091.7 637.1 1092.1 645.0 1092.5 647.5 M1067.5 650.0 C1068.8 648.3 1072.3 641.2 1075.0 640.0 C1077.7 638.8 1081.7 640.4 1083.8 642.5 C1085.8 644.6 1086.9 650.8 1087.5 652.5 M1030.0 615.0 L1035.0 637.5 M1115.0 615.0 L1117.5 635.0 M1182.5 412.5 C1185.8 414.6 1197.5 419.6 1202.5 425.0 C1207.5 430.4 1210.8 441.7 1212.5 445.0 M1135.0 490.0 C1138.3 486.2 1148.3 472.9 1155.0 467.5 C1161.7 462.1 1171.7 459.2 1175.0 457.5 M1272.5 592.5 C1274.6 596.2 1279.6 606.2 1285.0 615.0 C1290.4 623.8 1295.4 630.8 1305.0 645.0 C1314.6 659.2 1336.2 690.8 1342.5 700.0 M1187.5 572.5 L1200.0 610.0 M1170.0 592.5 L1202.5 657.5 M1162.5 607.5 L1190.0 657.5 M1152.5 610.0 L1180.0 670.0 M1230.0 572.5 L1242.5 605.0 M1242.5 562.5 L1252.5 627.5 M1252.5 570.0 L1267.5 620.0 M1222.5 565.0 C1224.6 561.7 1230.4 549.4 1235.0 545.0 C1239.6 540.6 1247.5 539.8 1250.0 538.8 M1232.5 667.5 L1270.0 637.5 M1222.5 685.0 L1287.5 650.0 M1192.5 520.0 L1215.0 500.0 M1132.5 530.0 L1143.8 538.8 M1006.0 776.5 C1000.8 780.2 986.6 791.4 975.0 798.5 C963.3 805.6 949.1 812.2 936.2 819.1 C923.3 826.0 909.1 833.8 897.5 839.8 C885.9 845.8 873.4 850.1 866.5 855.3 C859.6 860.5 856.6 866.5 856.2 870.8 C855.7 875.1 859.2 879.0 863.9 881.1 C868.6 883.3 874.7 885.9 884.6 883.7 C894.5 881.5 910.4 874.7 923.3 868.2 C936.2 861.7 951.3 853.1 962.0 845.0 C972.8 836.8 981.0 827.7 987.9 819.1 C994.8 810.5 999.5 800.2 1003.4 793.3 C1007.2 786.4 1009.8 780.4 1011.1 777.8 M938.8 788.1 C940.5 790.3 945.3 800.0 949.1 801.1 C953.0 802.1 959.9 795.7 962.0 794.6 M960.8 772.6 C962.3 774.4 966.1 783.4 969.8 783.0 C973.5 782.5 980.6 772.2 982.7 770.1 M980.1 757.1 L993.0 757.1 M915.6 816.5 C917.3 817.8 922.9 824.7 925.9 824.3 C928.9 823.9 932.3 815.7 933.6 814.0 M894.9 826.9 C896.6 829.0 902.6 839.4 905.2 839.8 C907.8 840.2 909.5 831.2 910.4 829.5 M869.1 839.8 C871.2 841.1 879.0 846.7 882.0 847.5 C885.0 848.4 886.3 845.4 887.1 845.0 M954.3 852.7 C956.0 855.7 962.0 872.1 964.6 870.8 C967.2 869.5 968.9 849.3 969.8 845.0 M933.6 865.6 C935.4 866.5 942.2 872.1 944.0 870.8 C945.7 869.5 944.0 860.0 944.0 857.9 M982.7 829.5 C985.3 830.3 996.9 836.8 998.2 834.6 C999.5 832.5 991.7 819.6 990.5 816.5 M1003.4 780.4 L1012.4 808.8 M830.3 881.1 L871.7 870.8 M843.2 919.9 L874.2 881.1 M832.9 896.6 L866.5 870.8 M884.6 888.9 L889.7 904.4 M897.5 881.1 L897.5 904.4 M910.4 876.0 L907.8 894.0 M887.1 764.9 L889.7 788.1 M894.9 764.9 L897.5 785.6 M902.6 777.8 L907.8 803.6 M987.9 937.9 C990.0 939.7 996.9 944.0 1000.8 948.3 C1004.7 952.6 1007.7 963.3 1011.1 963.8 C1014.6 964.2 1018.0 950.8 1021.4 950.8 C1024.9 950.8 1028.8 963.3 1031.8 963.8 C1034.8 964.2 1040.4 956.4 1039.5 953.4 C1038.7 950.4 1030.5 944.4 1026.6 945.7 C1022.7 947.0 1020.6 961.6 1016.3 961.2 C1012.0 960.7 1003.4 946.1 1000.8 943.1 M1124.8 906.9 C1126.5 911.2 1132.1 932.8 1135.1 932.8 C1138.1 932.8 1142.4 908.7 1142.8 906.9 C1143.3 905.2 1139.8 921.6 1137.7 922.4 C1135.5 923.3 1131.2 913.8 1129.9 912.1 M1122.2 814.0 L1135.1 839.8 M1024.0 870.8 L1029.2 922.4 M1039.5 863.0 L1040.8 883.7 M1044.7 896.6 L1067.9 896.6 M1135.3 637.3 C1138.9 644.4 1148.7 666.2 1156.7 680.0 C1164.7 693.8 1174.4 706.7 1183.3 720.0 C1192.2 733.3 1200.2 747.6 1210.0 760.0 C1219.8 772.4 1233.1 782.2 1242.0 794.7 C1250.9 807.1 1258.0 823.1 1263.3 834.7 C1268.7 846.2 1272.2 859.1 1274.0 864.0 M1274.0 594.7 C1276.7 599.6 1282.9 613.8 1290.0 624.0 C1297.1 634.2 1307.8 644.4 1316.7 656.0 C1325.6 667.6 1334.4 680.4 1343.3 693.3 C1352.2 706.2 1361.1 720.0 1370.0 733.3 C1378.9 746.7 1390.0 763.1 1396.7 773.3 C1403.3 783.6 1407.8 791.1 1410.0 794.7 M1283.3 850.7 C1288.9 847.1 1304.4 835.1 1316.7 829.3 C1328.9 823.6 1343.3 822.7 1356.7 816.0 C1370.0 809.3 1390.0 793.8 1396.7 789.3 M1187.3 573.3 L1202.0 610.7 M1167.3 592.0 L1202.0 656.0 M1151.3 605.3 L1183.3 666.7 M1202.0 682.7 L1212.7 712.0 M1231.3 666.7 L1270.0 636.0 M1218.0 685.3 L1287.3 650.7 M1300.7 677.3 L1322.0 720.0 M1327.3 725.3 L1356.7 773.3 M1316.7 746.7 L1343.3 778.7 M1287.3 757.3 L1322.0 800.0 M1274.0 792.0 L1292.7 829.3 M1252.7 794.7 L1274.0 832.0 M1220.7 741.3 L1244.7 781.3 M1242.0 568.0 L1255.3 632.0 M1231.3 570.7 L1268.7 618.7 M1130.0 781.3 L1156.7 746.7 M1026.9 917.5 C1027.2 918.4 1027.8 923.9 1028.7 923.1 C1029.7 922.3 1031.2 916.9 1032.5 912.8 C1033.7 908.7 1035.6 901.1 1036.2 898.7 M983.7 936.2 C983.9 937.8 983.0 941.7 984.7 945.6 C986.4 949.5 990.2 955.3 994.1 959.7 C998.0 964.1 1003.4 968.6 1008.1 971.9 C1012.8 975.2 1019.8 978.1 1022.2 979.4 M1118.7 907.2 L1124.4 912.8 M1012.5 695.3 L1021.1 683.6 L1021.9 692.2 L1031.2 679.7 L1030.5 688.3 L1043.8 682.8 L1059.4 671.9 L1056.2 685.2 L1068.8 674.2 L1068.0 688.3 L1082.8 672.7 L1070.3 697.7 L1088.3 673.4 L1082.8 691.4 L1097.7 672.7 L1090.6 686.7 L1101.6 667.2 L1100.0 684.4 L1106.2 668.8 L1102.3 684.4 L1112.5 670.3 L1113.3 679.7 L1118.8 670.3 L1117.2 680.5 M1013.3 727.3 C1014.5 726.2 1016.8 722.1 1020.3 720.3 C1023.8 718.5 1031.0 715.6 1034.4 716.4 C1037.8 717.2 1037.9 724.6 1040.6 725.0 C1043.4 725.4 1048.6 718.8 1050.8 718.8 C1053.0 718.8 1053.4 724.0 1053.9 725.0 M1100.0 724.2 C1100.8 723.3 1103.3 718.6 1104.7 718.8 C1106.1 718.9 1106.8 725.7 1108.6 725.0 C1110.4 724.3 1113.2 716.7 1115.6 714.8 C1118.1 713.0 1122.1 714.2 1123.4 714.1 M1101.6 735.9 C1104.2 734.9 1112.8 732.3 1117.2 729.7 C1121.6 727.1 1126.3 721.9 1128.1 720.3" fill="none" stroke="#9a9a9a" stroke-width="1.2" stroke-linecap="round" stroke-linejoin="round"/><path d="M446.7 142.8 L467.7 139.3 L487.5 144.0 L488.7 166.2 M446.7 142.8 L447.8 169.7 M437.3 151.0 L438.5 172.0 L436.2 190.7 L438.5 214.0 L440.8 246.7 L439.7 270.0 M443.2 144.0 L444.3 170.8 M438.5 172.0 L465.3 169.7 L491.0 166.2 L494.5 183.7 M447.8 193.0 L470.0 189.5 L495.7 186.0 M500.3 184.8 L501.5 202.3 L493.3 207.0 L470.0 210.5 L444.3 214.0 M435.0 190.7 L449.0 197.7 M443.2 216.3 L453.7 212.8 L507.3 204.7 L514.3 229.2 M453.7 212.8 L454.8 230.3 M449.0 232.7 L474.7 228.0 L510.8 226.8 L514.3 263.0 M449.0 232.7 L450.2 260.7 M440.8 246.7 L450.2 253.7 M430.3 266.5 L477.0 265.3 L514.3 263.0 L541.2 263.5 M431.5 285.2 L465.3 281.7 L516.7 270.0 L527.2 268.8 M430.3 267.7 L431.5 286.3 M526.0 265.3 L527.2 279.3 M447.8 286.3 L450.2 328.3 L454.8 368.0 M520.2 274.7 L526.0 316.7 L533.0 368.0 M470.0 300.3 L471.2 291.0 L481.7 291.0 L484.0 314.3 M465.3 307.3 L474.7 305.0 L477.0 330.7 L479.3 363.3 M484.0 302.7 L495.7 298.0 L496.8 312.0 L507.3 309.7 L512.0 335.3 M486.3 316.7 L493.3 324.8 L500.3 321.3 M482.8 344.7 L512.0 337.7 L515.5 344.7 L512.0 361.0 L488.7 368.0 L482.8 344.7 M409.3 362.2 L423.3 358.7 L430.3 347.0 L428.0 340.0 M409.3 362.2 L423.3 377.3 L432.7 401.8 M442.0 370.3 L493.3 370.3 L533.0 368.0 L535.3 384.3 L542.3 396.0 M432.7 401.8 L470.0 398.3 L542.3 396.0 M442.0 370.3 L440.8 398.3 M245.0 409.0 C249.2 407.8 261.8 403.7 270.0 402.0 C278.2 400.3 286.0 399.0 294.0 399.0 C302.0 399.0 311.2 399.5 318.0 402.0 C324.8 404.5 333.7 410.7 335.0 414.0 C336.3 417.3 331.8 419.3 326.0 422.0 C320.2 424.7 306.7 428.3 300.0 430.0 C293.3 431.7 291.3 432.3 286.0 432.0 C280.7 431.7 275.5 431.5 268.0 428.0 C260.5 424.5 245.5 413.8 241.0 411.0 M247.0 412.0 C246.8 418.3 245.2 438.7 246.0 450.0 C246.8 461.3 249.3 472.0 252.0 480.0 C254.7 488.0 258.3 494.0 262.0 498.0 C265.7 502.0 269.3 503.7 274.0 504.0 C278.7 504.3 284.7 502.7 290.0 500.0 C295.3 497.3 301.0 493.0 306.0 488.0 C311.0 483.0 316.3 477.7 320.0 470.0 C323.7 462.3 327.0 450.5 328.0 442.0 C329.0 433.5 326.3 422.8 326.0 419.0 M260.0 509.0 C260.5 507.7 261.7 501.2 263.0 501.0 C264.3 500.8 267.2 506.8 268.0 508.0 M278.0 510.0 C278.5 509.2 279.8 506.2 281.0 505.0 C282.2 503.8 283.8 502.7 285.0 503.0 C286.2 503.3 287.4 506.7 288.4 507.0 C289.4 507.3 289.7 506.3 291.0 505.0 C292.3 503.7 294.5 499.5 296.0 499.0 C297.5 498.5 298.7 501.4 300.0 502.0 C301.3 502.6 302.1 503.7 303.6 502.4 C305.1 501.1 307.3 496.4 309.0 494.0 C310.7 491.6 312.5 488.3 314.0 488.0 C315.5 487.7 316.7 491.9 318.0 492.4 C319.3 492.9 320.4 492.1 322.0 491.0 C323.6 489.9 326.1 486.3 327.6 486.0 C329.1 485.7 330.1 487.8 331.0 489.0 C331.9 490.2 332.7 492.3 333.0 493.0 M226.0 446.0 L248.0 460.0 M224.0 458.0 L242.0 470.0 M323.0 478.0 L353.0 500.0 M316.0 486.0 L344.0 509.0 M288.0 674.0 C288.5 670.5 284.0 659.0 291.0 653.0 C298.0 647.0 312.5 642.8 330.0 638.0 C347.5 633.3 378.0 626.5 396.0 624.5 C414.0 622.5 426.5 623.3 438.0 626.0 C449.5 628.8 459.5 636.3 465.0 641.0 C470.5 645.8 470.0 652.3 471.0 654.5 M280.5 668.0 C283.8 670.0 289.3 676.5 300.0 680.0 C310.8 683.5 327.5 689.5 345.0 689.0 C362.5 688.5 387.5 681.0 405.0 677.0 C422.5 673.0 438.0 669.0 450.0 665.0 C462.0 661.0 472.5 655.0 477.0 653.0 M294.0 680.0 C299.0 684.5 315.5 698.0 324.0 707.0 C332.5 716.0 339.5 726.0 345.0 734.0 C350.5 742.0 354.5 748.5 357.0 755.0 C359.5 761.5 359.5 770.0 360.0 773.0 M471.0 659.0 C465.0 664.5 445.0 682.0 435.0 692.0 C425.0 702.0 416.5 709.5 411.0 719.0 C405.5 728.5 402.5 740.0 402.0 749.0 C401.5 758.0 405.5 767.5 408.0 773.0 C410.5 778.5 415.5 780.5 417.0 782.0 M342.0 719.0 C347.5 719.8 364.0 723.0 375.0 723.5 C386.0 724.0 402.5 722.3 408.0 722.0 M346.5 737.0 C351.3 737.3 365.3 739.0 375.0 738.5 C384.8 738.0 400.0 734.8 405.0 734.0 M357.0 773.0 C356.0 776.0 349.0 786.0 351.0 791.0 C353.0 796.0 361.5 801.5 369.0 803.0 C376.5 804.5 388.0 803.5 396.0 800.0 C404.0 796.5 413.5 785.0 417.0 782.0 M324.0 773.0 L309.0 812.0 M324.0 773.0 C338.5 772.5 388.0 771.8 411.0 770.0 C434.0 768.3 452.5 763.0 462.0 762.5 C471.5 762.0 468.0 759.8 468.0 767.0 C468.0 774.3 463.0 799.5 462.0 806.0 M309.0 812.0 C317.5 811.5 334.5 810.0 360.0 809.0 C385.5 808.0 445.0 806.5 462.0 806.0 M343.5 669.5 L342.0 650.0 L346.5 638.0 L339.6 626.0 L341.4 617.0 L336.6 611.0 L339.0 599.0 L337.5 590.0 L345.0 587.0 L351.0 578.0 L357.0 575.0 L360.0 569.0 L366.0 567.5 L369.0 560.0 L375.0 554.0 L378.0 545.0 L382.5 542.0 L387.0 534.5 L393.0 539.0 L397.5 545.0 L402.0 548.0 L408.0 539.0 L405.6 551.0 L405.0 557.0 L411.0 560.0 L414.0 572.0 L417.0 578.0 L426.0 581.0 L429.0 590.0 L432.0 602.0 L438.0 611.0 L433.5 620.0 L436.5 629.0 L435.0 635.0 L435.6 642.5 L435.0 650.0 M360.0 665.0 L364.5 650.0 L366.0 641.0 L360.0 638.0 L363.0 620.0 L367.5 614.0 L370.5 602.0 L373.5 623.0 L376.5 611.0 L378.0 602.0 L381.0 611.0 L384.0 611.0 L393.0 602.0 L402.0 596.0 M393.0 650.0 L396.0 629.0 L400.5 638.0 L405.0 626.0 L409.5 632.0 L411.0 620.0 L412.5 644.0 L417.0 644.0 L417.0 653.0 M366.0 758.0 C369.0 757.5 379.0 756.0 384.0 755.0 C389.0 754.0 394.0 752.5 396.0 752.0 M396.0 871.3 C395.7 868.6 393.9 857.8 394.0 854.7 C394.1 851.6 395.3 851.6 396.7 852.7 C398.0 853.8 399.8 858.6 402.0 861.3 C404.2 864.1 406.4 868.1 410.0 869.3 C413.6 870.6 418.9 870.0 423.3 868.7 C427.8 867.3 433.6 864.3 436.7 861.3 C439.8 858.3 440.9 852.0 442.0 850.7 C443.1 849.3 443.8 848.4 443.3 853.3 C442.9 858.2 440.7 872.4 439.3 880.0 C438.0 887.6 437.1 894.2 435.3 898.7 C433.6 903.1 431.8 904.9 428.7 906.7 C425.6 908.4 420.0 909.3 416.7 909.3 C413.3 909.3 411.1 909.8 408.7 906.7 C406.2 903.6 404.2 896.0 402.0 890.7 C399.8 885.3 396.4 877.3 395.3 874.7 M399.3 888.7 C398.7 888.9 396.9 889.0 395.3 890.0 C393.8 891.0 392.4 893.6 390.0 894.7 C387.6 895.8 382.8 897.3 380.7 896.7 C378.6 896.0 376.9 893.0 377.3 890.7 C377.8 888.3 380.1 884.9 383.3 882.7 C386.6 880.4 393.7 878.2 396.7 877.3 C399.7 876.4 400.6 877.3 401.3 877.3 M443.3 868.0 C444.4 867.3 446.9 865.4 450.0 864.0 C453.1 862.6 459.3 859.1 462.0 859.3 C464.7 859.6 465.0 861.9 466.0 865.3 C467.0 868.8 468.7 878.7 468.0 880.0 C467.3 881.3 464.1 874.2 462.0 873.3 C459.9 872.4 457.3 873.9 455.3 874.7 C453.3 875.4 450.9 877.4 450.0 878.0 M366.0 988.0 C366.0 984.2 364.7 972.4 366.0 965.3 C367.3 958.2 370.0 951.6 374.0 945.3 C378.0 939.1 384.0 933.1 390.0 928.0 C396.0 922.9 404.4 917.4 410.0 914.7 C415.6 911.9 418.9 910.9 423.3 911.3 C427.8 911.8 432.7 913.7 436.7 917.3 C440.7 921.0 443.3 924.7 447.3 933.3 C451.3 942.0 458.4 963.3 460.7 969.3 M366.0 961.3 C364.4 958.4 360.7 950.2 356.7 944.0 C352.7 937.8 342.2 926.2 342.0 924.0 C341.8 921.8 355.1 935.1 355.3 930.7 C355.6 926.2 344.9 903.1 343.3 897.3 C341.8 891.6 342.7 892.4 346.0 896.0 C349.3 899.6 357.8 913.1 363.3 918.7 C368.9 924.2 376.7 927.6 379.3 929.3 M387.3 930.7 L379.3 910.7 M985.0 275.0 C984.8 277.9 982.9 286.2 983.8 292.5 C984.6 298.8 986.0 306.2 990.0 312.5 C994.0 318.8 999.2 324.4 1007.5 330.0 C1015.8 335.6 1034.6 343.5 1040.0 346.2 M991.2 278.8 C992.7 282.3 996.5 292.3 1000.0 300.0 C1003.5 307.7 1008.3 320.0 1012.5 325.0 C1016.7 330.0 1019.6 330.2 1025.0 330.0 C1030.4 329.8 1041.7 324.8 1045.0 323.8 M1210.0 273.8 C1206.2 275.6 1196.2 279.4 1187.5 285.0 C1178.8 290.6 1167.5 301.2 1157.5 307.5 C1147.5 313.8 1132.5 320.0 1127.5 322.5 M1210.0 275.0 C1206.2 279.2 1195.4 292.1 1187.5 300.0 C1179.6 307.9 1172.1 315.8 1162.5 322.5 C1152.9 329.2 1135.4 337.1 1130.0 340.0 M1043.8 310.0 C1043.3 314.6 1040.2 327.5 1041.2 337.5 C1042.3 347.5 1044.4 359.6 1050.0 370.0 C1055.6 380.4 1070.0 395.8 1075.0 400.0 C1080.0 404.2 1075.4 397.9 1080.0 395.0 C1084.6 392.1 1095.8 388.3 1102.5 382.5 C1109.2 376.7 1114.8 371.5 1120.0 360.0 C1125.2 348.5 1131.5 321.5 1133.8 313.8 M1082.5 332.5 C1083.5 335.4 1089.0 346.0 1088.8 350.0 C1088.5 354.0 1082.5 355.2 1081.2 356.2 M1071.2 371.2 L1091.2 372.5 M1030.0 358.8 L1053.8 361.2 M1117.5 361.2 C1121.7 359.4 1137.7 352.7 1142.5 350.0 C1147.3 347.3 1149.2 345.6 1146.2 345.0 C1143.3 344.4 1128.5 346.0 1125.0 346.2 M1102.5 382.5 C1105.4 386.2 1113.8 397.5 1120.0 405.0 C1126.2 412.5 1135.4 422.9 1140.0 427.5 C1144.6 432.1 1146.2 431.7 1147.5 432.5 M1147.5 432.5 L1148.0 433.0 M976.2 486.2 C974.4 487.3 968.5 487.7 965.0 492.5 C961.5 497.3 960.0 505.0 955.0 515.0 C950.0 525.0 941.7 542.5 935.0 552.5 C928.3 562.5 919.2 562.9 915.0 575.0 C910.8 587.1 912.5 611.7 910.0 625.0 C907.5 638.3 902.5 642.5 900.0 655.0 C897.5 667.5 895.8 692.5 895.0 700.0 M987.5 520.0 C983.8 525.0 970.4 540.8 965.0 550.0 C959.6 559.2 959.2 562.5 955.0 575.0 C950.8 587.5 944.2 608.3 940.0 625.0 C935.8 641.7 931.7 666.7 930.0 675.0 M935.0 552.5 C937.5 553.8 946.2 556.2 950.0 560.0 C953.8 563.8 956.2 572.5 957.5 575.0 M978.8 462.5 C980.6 460.4 985.6 452.7 990.0 450.0 C994.4 447.3 999.6 445.0 1005.0 446.2 C1010.4 447.5 1016.7 451.5 1022.5 457.5 C1028.3 463.5 1035.4 474.6 1040.0 482.5 C1044.6 490.4 1049.2 497.1 1050.0 505.0 C1050.8 512.9 1046.7 523.3 1045.0 530.0 C1043.3 536.7 1040.8 542.5 1040.0 545.0 M980.0 472.5 C982.5 477.1 989.6 490.4 995.0 500.0 C1000.4 509.6 1008.3 523.8 1012.5 530.0 C1016.7 536.2 1015.4 535.2 1020.0 537.5 C1024.6 539.8 1036.7 542.7 1040.0 543.8 M985.0 530.0 C987.9 533.3 997.9 540.4 1002.5 550.0 C1007.1 559.6 1010.8 568.3 1012.5 587.5 C1014.2 606.7 1012.5 652.1 1012.5 665.0 M1042.5 650.0 C1044.2 643.8 1047.9 621.2 1052.5 612.5 C1057.1 603.8 1064.2 599.2 1070.0 597.5 C1075.8 595.8 1082.5 599.2 1087.5 602.5 C1092.5 605.8 1097.1 609.6 1100.0 617.5 C1102.9 625.4 1104.2 644.6 1105.0 650.0 M1100.0 517.5 C1102.5 519.2 1110.4 527.1 1115.0 527.5 C1119.6 527.9 1123.3 523.3 1127.5 520.0 C1131.7 516.7 1137.9 509.6 1140.0 507.5 M1092.5 520.0 C1093.8 516.7 1096.2 509.2 1100.0 500.0 C1103.8 490.8 1108.3 476.7 1115.0 465.0 C1121.7 453.3 1135.8 435.8 1140.0 430.0 M955.0 535.0 L967.5 546.2 M1130.0 442.5 C1134.2 438.3 1144.6 423.3 1155.0 417.5 C1165.4 411.7 1186.2 409.2 1192.5 407.5 M1172.5 460.0 C1173.8 460.4 1174.6 464.8 1180.0 462.5 C1185.4 460.2 1199.0 448.8 1205.0 446.2 C1211.0 443.8 1214.4 447.3 1216.2 447.5 M1180.0 460.0 C1184.2 462.5 1196.7 467.5 1205.0 475.0 C1213.3 482.5 1224.2 494.2 1230.0 505.0 C1235.8 515.8 1235.0 528.3 1240.0 540.0 C1245.0 551.7 1255.0 565.0 1260.0 575.0 C1265.0 585.0 1267.5 589.2 1270.0 600.0 C1272.5 610.8 1272.5 630.0 1275.0 640.0 C1277.5 650.0 1281.7 650.0 1285.0 660.0 C1288.3 670.0 1293.3 693.3 1295.0 700.0 M1167.5 512.5 C1171.7 518.3 1183.8 536.2 1192.5 547.5 C1201.2 558.8 1212.5 569.2 1220.0 580.0 C1227.5 590.8 1233.3 600.8 1237.5 612.5 C1241.7 624.2 1242.5 635.4 1245.0 650.0 C1247.5 664.6 1251.2 691.7 1252.5 700.0 M1130.0 635.0 C1131.7 627.1 1135.8 603.3 1140.0 587.5 C1144.2 571.7 1150.0 551.2 1155.0 540.0 C1160.0 528.8 1167.5 523.3 1170.0 520.0 M894.9 690.0 C893.6 693.4 889.9 702.1 887.1 710.7 C884.4 719.3 879.8 732.2 878.1 741.7 C876.4 751.1 874.9 758.9 876.8 767.5 C878.8 776.1 884.6 786.8 889.7 793.3 C894.9 799.8 903.5 805.4 907.8 806.2 C912.1 807.1 914.1 804.1 915.6 798.5 C917.1 792.9 916.4 780.4 916.8 772.6 C917.3 764.9 916.2 756.9 918.1 752.0 C920.1 747.0 924.6 742.9 928.5 742.9 C932.3 742.9 938.4 752.2 941.4 752.0 C944.4 751.8 947.4 746.8 946.5 741.7 C945.7 736.5 939.2 727.0 936.2 721.0 C933.2 715.0 930.0 710.7 928.5 705.5 C927.0 700.3 927.4 692.6 927.2 690.0 M1000.8 690.0 C1000.8 698.6 999.9 726.6 1000.8 741.7 C1001.6 756.7 1002.9 769.6 1006.0 780.4 C1009.0 791.2 1016.3 797.2 1018.9 806.2 C1021.4 815.3 1021.9 823.9 1021.4 834.6 C1021.0 845.4 1018.9 859.6 1016.3 870.8 C1013.7 882.0 1010.3 891.9 1006.0 901.8 C1001.6 911.7 993.0 925.5 990.5 930.2 M998.2 935.4 C996.1 935.8 986.6 935.4 985.3 937.9 C984.0 940.5 985.7 944.4 990.5 950.8 C995.2 957.3 1004.2 971.5 1013.7 976.7 C1023.2 981.8 1041.7 981.0 1047.3 981.8 M1065.4 731.3 C1064.9 737.3 1064.1 757.1 1062.8 767.5 C1061.5 777.8 1057.6 784.7 1057.6 793.3 C1057.6 801.9 1061.5 809.7 1062.8 819.1 C1064.1 828.6 1065.4 838.1 1065.4 850.1 C1065.4 862.2 1063.6 877.2 1062.8 891.4 C1061.9 905.7 1062.8 920.3 1060.2 935.4 C1057.6 950.4 1049.4 974.1 1047.3 981.8 M1029.2 795.9 L1049.9 824.3 M1057.6 795.9 L1026.6 826.9 M1008.5 706.8 C1015.9 707.9 1043.0 709.6 1052.4 713.2 C1061.9 716.9 1060.6 724.9 1065.4 728.7 C1070.1 732.6 1075.3 733.0 1080.8 736.5 C1086.4 739.9 1093.3 742.5 1098.9 749.4 C1104.5 756.3 1110.5 767.9 1114.4 777.8 C1118.3 787.7 1122.2 798.5 1122.2 808.8 C1122.2 819.1 1118.7 831.6 1114.4 839.8 C1110.1 848.0 1099.8 851.8 1096.3 857.9 C1092.9 863.9 1091.6 868.2 1093.8 876.0 C1095.9 883.7 1101.9 894.5 1109.3 904.4 C1116.6 914.3 1130.3 932.3 1137.7 935.4 C1145.0 938.4 1151.0 927.6 1153.2 922.4 C1155.3 917.3 1153.2 909.5 1150.6 904.4 C1148.0 899.2 1140.2 898.8 1137.7 891.4 C1135.1 884.1 1134.7 870.4 1135.1 860.5 C1135.5 850.6 1137.2 841.5 1140.2 832.0 C1143.3 822.6 1148.9 812.7 1153.2 803.6 C1157.5 794.6 1164.4 785.6 1166.1 777.8 C1167.8 770.1 1166.5 765.8 1163.5 757.1 C1160.5 748.5 1152.7 736.9 1148.0 726.2 C1143.3 715.4 1137.2 698.2 1135.1 692.6 M1080.8 741.7 C1081.7 736.9 1080.4 720.1 1086.0 713.2 C1091.6 706.4 1106.2 703.8 1114.4 700.3 C1122.6 696.9 1131.6 693.9 1135.1 692.6 M1018.9 728.7 C1021.0 730.5 1027.0 736.9 1031.8 739.1 C1036.5 741.2 1044.7 741.2 1047.3 741.7 M1124.8 772.6 L1160.9 762.3 M1127.3 793.3 L1155.7 746.8 M1204.7 560.0 C1207.8 564.4 1217.1 574.2 1223.3 586.7 C1229.6 599.1 1238.0 621.3 1242.0 634.7 C1246.0 648.0 1245.6 655.1 1247.3 666.7 C1249.1 678.2 1251.3 695.1 1252.7 704.0 C1254.0 712.9 1256.2 718.7 1255.3 720.0 C1254.4 721.3 1250.4 712.4 1247.3 712.0 C1244.2 711.6 1238.9 713.3 1236.7 717.3 C1234.4 721.3 1232.7 730.9 1234.0 736.0 C1235.3 741.1 1238.9 746.7 1244.7 748.0 C1250.4 749.3 1261.1 747.8 1268.7 744.0 C1276.2 740.2 1285.6 732.9 1290.0 725.3 C1294.4 717.8 1295.3 708.4 1295.3 698.7 C1295.3 688.9 1292.7 676.9 1290.0 666.7 C1287.3 656.4 1282.0 647.1 1279.3 637.3 C1276.7 627.6 1276.7 618.2 1274.0 608.0 C1271.3 597.8 1266.9 584.0 1263.3 576.0 C1259.8 568.0 1254.4 562.7 1252.7 560.0 M1130.0 637.3 C1131.8 645.3 1138.0 674.2 1140.7 685.3 C1143.3 696.4 1145.1 700.9 1146.0 704.0 M1130.0 773.3 L1162.0 762.7 M992.2 937.2 C994.1 939.5 999.2 946.2 1003.4 951.2 C1007.7 956.2 1013.6 963.6 1017.5 967.2 C1021.4 970.8 1024.5 972.3 1026.9 972.8 C1029.2 973.3 1031.2 971.7 1031.6 970.0 C1031.9 968.3 1031.1 965.6 1028.7 962.5 C1026.4 959.4 1021.6 954.7 1017.5 951.2 C1013.4 947.8 1005.9 942.8 1004.4 941.9 C1002.8 940.9 1005.2 942.2 1008.1 945.6 C1011.1 949.1 1018.3 958.7 1022.2 962.5 C1026.1 966.2 1028.9 967.8 1031.6 968.1 C1034.2 968.4 1036.7 966.2 1038.1 964.4 C1039.5 962.5 1040.9 959.7 1040.0 956.9 C1039.1 954.1 1035.0 949.4 1032.5 947.5 C1030.0 945.6 1026.4 945.0 1025.0 945.6 C1023.6 946.2 1023.3 948.3 1024.1 951.2 C1024.8 954.2 1027.7 960.5 1029.7 963.4 C1031.7 966.4 1034.5 969.2 1036.2 969.1 C1038.0 968.9 1040.0 965.5 1040.0 962.5 C1040.0 959.5 1037.5 953.1 1036.2 951.2 C1035.0 949.4 1033.1 950.0 1032.5 951.2 C1031.9 952.5 1032.5 957.5 1032.5 958.7 M1024.1 891.2 C1024.2 893.3 1025.0 899.8 1025.0 903.4 C1025.0 907.0 1024.2 911.2 1024.1 912.8 M1036.2 915.6 C1036.6 912.5 1037.3 901.2 1038.1 896.9 C1038.9 892.5 1039.7 888.1 1040.9 889.4 C1042.2 890.6 1044.2 904.5 1045.6 904.4 C1047.0 904.2 1048.3 888.9 1049.4 888.4 C1050.5 888.0 1051.7 899.4 1052.2 901.6 M1124.4 912.8 C1124.7 914.4 1125.0 919.8 1126.2 922.2 C1127.5 924.5 1129.7 926.4 1131.9 926.9 C1134.1 927.3 1137.8 928.1 1139.4 925.0 C1140.9 921.9 1141.6 911.9 1141.2 908.1 C1140.9 904.4 1138.7 902.5 1137.5 902.5 C1136.2 902.5 1134.2 904.1 1133.7 908.1 C1133.3 912.2 1133.7 922.2 1134.7 926.9 C1135.6 931.6 1137.7 936.2 1139.4 936.2 C1141.1 936.2 1144.4 930.0 1145.0 926.9 C1145.6 923.7 1144.2 920.3 1143.1 917.5 C1142.0 914.7 1139.4 907.5 1138.4 910.0 C1137.5 912.5 1138.4 932.8 1137.5 932.5 C1136.6 932.2 1134.7 912.3 1132.8 908.1 C1130.9 903.9 1127.8 905.6 1126.2 907.2 C1124.7 908.7 1123.9 915.8 1123.4 917.5 M1040.0 948.4 C1040.6 944.8 1041.9 933.6 1043.7 926.9 C1045.6 920.2 1047.8 913.0 1051.2 908.1 C1054.7 903.3 1061.2 899.8 1064.4 897.8 C1067.5 895.9 1069.1 896.6 1070.0 896.4 M1000.0 693.8 C1000.8 691.7 1001.6 685.2 1004.7 681.2 C1007.8 677.3 1011.7 672.5 1018.8 669.9 C1025.8 667.3 1037.0 667.3 1046.9 665.6 C1056.8 664.0 1065.4 661.8 1078.1 660.2 C1090.9 658.5 1115.4 654.8 1123.4 655.5 C1131.5 656.1 1125.0 661.1 1126.6 664.1 C1128.1 667.1 1131.1 670.6 1132.8 673.4 C1134.5 676.3 1136.5 679.4 1136.7 681.2 C1137.0 683.1 1134.8 683.9 1134.4 684.4 M1123.4 661.7 C1125.0 665.2 1130.5 677.0 1132.8 682.8 C1135.2 688.7 1136.7 694.5 1137.5 696.9 M1008.6 696.1 C1012.4 695.8 1023.8 695.4 1031.2 694.5 C1038.7 693.6 1047.9 690.1 1053.1 690.6 C1058.3 691.1 1060.2 694.8 1062.5 697.7 C1064.8 700.5 1065.6 705.3 1067.2 707.8 C1068.8 710.3 1070.2 714.1 1071.9 712.5 C1073.6 710.9 1072.4 702.1 1077.3 698.4 C1082.3 694.8 1093.8 693.9 1101.6 690.6 C1109.4 687.3 1120.4 680.5 1124.2 678.5 M1110.9 735.9 C1112.6 734.6 1118.0 731.5 1121.1 728.1 C1124.2 724.7 1128.3 717.7 1129.7 715.6" fill="none" stroke="#4e4e4e" stroke-width="1.6" stroke-linecap="round" stroke-linejoin="round"/><ellipse cx="666" cy="832" rx="2.2" ry="3.6" fill="#333" transform="rotate(-35 666 832)"/><ellipse cx="695" cy="830" rx="2.2" ry="3.6" fill="#333" transform="rotate(35 695 830)"/><circle cx="680" cy="846" r="1.6" fill="#222"/><circle cx="681" cy="856" r="1.6" fill="#222"/></svg><div class="a" style="left:1638px;top:129px;width:14px;height:1023px;background:#3e3e3e;"></div><div class="a" style="left:1639px;top:129px;width:13px;height:14px;background:#414141;border:1px solid #555"></div><svg class="a" style="left:1641px;top:133px" width="10" height="7" viewBox="0 0 10 7"><path fill="#8f8f8f" d="M1 6 L5 1 L9 6 Z"/></svg><div class="a" style="left:1639px;top:463px;width:13px;height:356px;background:#454545;border:1px solid #555"></div><div class="a" style="left:1639px;top:1138px;width:13px;height:14px;background:#414141;border:1px solid #555"></div><svg class="a" style="left:1641px;top:1142px" width="10" height="7" viewBox="0 0 10 7"><path fill="#8f8f8f" d="M1 1 L5 6 L9 1 Z"/></svg><div class="a" style="left:72px;top:1152px;width:1566px;height:14px;background:#3e3e3e;"></div><div class="a" style="left:72px;top:1153px;width:13px;height:13px;background:#414141;border:1px solid #555"></div><svg class="a" style="left:75px;top:1155px" width="7" height="10" viewBox="0 0 7 10"><path fill="#8f8f8f" d="M6 1 L1 5 L6 9 Z"/></svg><div class="a" style="left:573px;top:1153px;width:564px;height:13px;background:#454545;border:1px solid #555"></div><div class="a" style="left:1625px;top:1153px;width:13px;height:13px;background:#414141;border:1px solid #555"></div><svg class="a" style="left:1628px;top:1155px" width="7" height="10" viewBox="0 0 7 10"><path fill="#8f8f8f" d="M1 1 L6 5 L1 9 Z"/></svg><div class="a" style="left:1651px;top:129px;width:1px;height:1023px;background:#4f4f4f;"></div><svg class="a" style="left:7px;top:1176px" width="14" height="14" viewBox="0 0 14 14"><rect x="0.5" y="0.5" width="13" height="13" fill="none" stroke="#b8b8b8" stroke-width="1"/><circle cx="7" cy="7" r="4" fill="none" stroke="#b8b8b8" stroke-dasharray="1 1"/></svg><div class="tx" style="left:37.00px;top:1177.40px;font-size:14.3px;color:#d4d4d4;font-weight:400;transform:scaleX(0.9919);">c) Pencil-2</div><div class="tx" style="left:463.00px;top:1177.40px;font-size:14.3px;color:#d4d4d4;font-weight:400;transform:scaleX(1.0456);">RGB/Alpha (8-bit integer/channel)&nbsp; sRGB-elle-V2-srgbtrc.icc</div><div class="a" style="left:1382px;top:1170px;width:170px;height:27px;background:#474747;border:1px solid #3a3a3a"></div><div class="a" style="left:1384px;top:1172px;width:1px;height:23px;background:#6f8db0;"></div><div class="tx" style="left:1387.00px;top:1177.40px;font-size:14.3px;color:#d4d4d4;font-weight:400;transform:scaleX(1.0220);">3,508 x 2,480 (57.2 MiB)</div><div class="a" style="left:1559px;top:1171px;width:25px;height:25px;border-radius:13px;background:#333"></div><svg class="a" style="left:1559px;top:1171px" width="25" height="25" viewBox="0 0 25 25"><circle cx="12.5" cy="12.5" r="10" fill="none" stroke="#444" stroke-width="0.8" stroke-dasharray="1 2"/><path stroke="#eee" stroke-width="1.2" d="M12 12.5 H22"/><circle cx="12" cy="12.5" r="1.5" fill="#eee"/><circle cx="22" cy="12.5" r="1.5" fill="#eee"/></svg><div class="tx" style="left:1592.00px;top:1177.40px;font-size:14.3px;color:#d4d4d4;font-weight:400;transform:scaleX(1.0431);">0.00˚</div><div class="tx" style="left:1753.00px;top:1177.40px;font-size:14.3px;color:#d4d4d4;font-weight:400;transform:scaleX(1.0358);">41.3%</div><div class="a" style="left:1813px;top:1182px;width:81px;height:4px;background:#3a3a3a;border-radius:2px"></div><div class="a" style="left:1427px;top:1192px;width:7px;height:1px;background:#d4d4d4;"></div><div class="a" style="left:1813px;top:1182px;width:26px;height:4px;background:#6f9bc4;border-radius:2px"></div><div class="a" style="left:1831px;top:1175px;width:15px;height:17px;border-radius:4px;background:#5a5a5a;border:1px solid #333"></div><svg class="a" style="left:1897px;top:1175px" width="18" height="17" viewBox="0 0 18 17"><path fill="none" stroke="#d0d0d0" stroke-width="1.3" d="M1 1 H17 V11 H1 Z M9 11 V15 M5 15.5 H13"/><circle cx="9" cy="6" r="1" fill="#d0d0d0"/></svg><div class="a" style="left:1653px;top:97px;width:267px;height:1069px;background:#474747;"></div><div class="a" style="left:1655.5px;top:625px;width:1.5px;height:1.5px;background:#8a8a8a;"></div><div class="a" style="left:1655.5px;top:628px;width:1.5px;height:1.5px;background:#8a8a8a;"></div><div class="a" style="left:1655.5px;top:631px;width:1.5px;height:1.5px;background:#8a8a8a;"></div><div class="a" style="left:1655.5px;top:634px;width:1.5px;height:1.5px;background:#8a8a8a;"></div><div class="a" style="left:1655.5px;top:637px;width:1.5px;height:1.5px;background:#8a8a8a;"></div><div class="a" style="left:1655.5px;top:640px;width:1.5px;height:1.5px;background:#8a8a8a;"></div><div class="a" style="left:1659px;top:98px;width:164px;height:28px;border-radius:4px 4px 0 0;background:#4a4a4a;border:1px solid #3c3c3c;border-bottom:none"></div><div class="tx" style="left:1671.00px;top:105.15px;font-size:14px;color:#d8d8d8;font-weight:400;transform:scaleX(0.9188);">Advanced Color Selec...</div><div class="a" style="left:1824px;top:100px;width:95px;height:25px;border-radius:4px 4px 0 0;background:#444;border:1px solid #3a3a3a;border-bottom:none"></div><div class="tx" style="left:1838.00px;top:106.15px;font-size:14px;color:#d8d8d8;font-weight:400;transform:scaleX(0.9862);">Tool Opti...</div><svg class="a" style="left:1660px;top:126px" width="16" height="16" viewBox="0 0 16 16"><circle cx="8" cy="8" r="7.3" fill="none" stroke="#d5d5d5" stroke-width="1.1"/><path fill="none" stroke="#d5d5d5" stroke-width="1.2" d="M5.5 7.5 V6 A2.5 2.5 0 0 1 10.5 6"/><rect x="4" y="8" width="8" height="4.5" fill="#d5d5d5"/></svg><div class="tx" style="left:1682.00px;top:127.65px;font-size:14px;color:#d2d2d2;font-weight:400;transform:scaleX(0.9233);">Advanced Color Selector</div><svg class="a" style="left:1881px;top:128px" width="14" height="14" viewBox="0 0 14 14"><path fill="none" stroke="#d5d5d5" stroke-width="1.3" d="M1 6 H8 V13 H1 Z M5 6 V1 H13 V8 H8"/></svg><svg class="a" style="left:1904px;top:128px" width="12" height="12" viewBox="0 0 12 12"><path stroke="#d5d5d5" stroke-width="1.4" d="M1 1 L11 11 M11 1 L1 11"/></svg><svg class="a" style="left:1667px;top:154px" width="16" height="16" viewBox="0 0 16 16"><path fill="none" stroke="#d5d5d5" stroke-width="1.2" d="M0.6 0.6 H15.4 V15.4 H0.6 Z M0.6 3 H15.4"/><path fill="#d5d5d5" d="M3 6 H5 V13 H3 Z M7 7 H13 V8.2 H7 Z M7 10 H13 V11.2 H7 Z M7 12.5 H13 V13.7 H7 Z"/></svg><div class="a" style="left:1903px;top:145px;width:17px;height:16px;background:#3a3a3a;"></div><svg class="a" style="left:1904px;top:146px" width="15" height="15" viewBox="0 0 15 15"><circle cx="7.5" cy="7.5" r="6" fill="none" stroke="#d5d5d5" stroke-width="1.4"/><path stroke="#d5d5d5" stroke-width="1.4" d="M3.5 3.5 L11.5 11.5"/></svg><div class="a" style="left:1903px;top:160px;width:17px;height:15px;background:#000;"></div><div class="a" style="left:1903px;top:175px;width:17px;height:16px;background:#b8148e;"></div><div class="a" style="left:1903px;top:191px;width:17px;height:166px;background:#3c3c3c;"></div><div class="a" style="left:1701px;top:145px;width:159px;height:159px;border-radius:50%;background:conic-gradient(from 0deg,#80ff00,#00ff00,#00ff80,#00ffff,#0080ff,#0000ff,#8000ff,#ff00ff,#ff0080,#ff0000,#ff8000,#ffff00,#80ff00);"></div><div class="a" style="left:1713px;top:157px;width:135px;height:135px;border-radius:50%;background:#474747"></div><svg class="a" style="left:1701px;top:145px" width="159" height="159" viewBox="0 0 159 159"><defs><linearGradient id="tgw" gradientUnits="userSpaceOnUse" x1="108.2" y1="62" x2="23.5" y2="112.5"><stop offset="0" stop-color="#fff" stop-opacity="0"/><stop offset="1" stop-color="#fff" stop-opacity="1"/></linearGradient><linearGradient id="tgm" gradientUnits="userSpaceOnUse" x1="50.7" y1="63.7" x2="138.3" y2="112.5"><stop offset="0" stop-color="#ff00c0" stop-opacity="0"/><stop offset="1" stop-color="#ff00c0" stop-opacity="1"/></linearGradient></defs><g style="isolation:isolate"><path d="M79 13 L23.5 112.5 L138.3 112.5 Z" fill="#000"/><path d="M79 13 L23.5 112.5 L138.3 112.5 Z" fill="url(#tgw)" style="mix-blend-mode:plus-lighter"/><path d="M79 13 L23.5 112.5 L138.3 112.5 Z" fill="url(#tgm)" style="mix-blend-mode:plus-lighter"/></g><circle cx="79" cy="12" r="3" fill="none" stroke="#aaa" stroke-width="1"/><path d="M22 131 L30 123" stroke="#eee" stroke-width="1.3"/></svg><div class="a" style="left:1659px;top:306px;width:244px;height:32px;background:#3e3e3e;"></div><div class="a" style="left:1659px;top:306px;width:244px;height:10px;background:#000;"></div><div class="a" style="left:1659px;top:317px;width:244px;height:10px;background:linear-gradient(90deg,#000 0%,#000 49%,#000 50%,#8b4343 100%);"></div><div class="a" style="left:1659px;top:328px;width:244px;height:10px;background:linear-gradient(90deg,#000 0%,#000 49%,#000 50%,#8c8c8c 100%);"></div><div class="a" style="left:1776px;top:306px;width:2px;height:32px;background:#a8a8a8;"></div><div class="a" style="left:1786px;top:306px;width:2px;height:32px;background:#a8a8a8;"></div><div class="a" style="left:1659px;top:341px;width:244px;height:16px;background:#3c3c3c;"></div><svg class="a" style="left:1661px;top:342px" width="13" height="13" viewBox="0 0 13 13"><path fill="none" stroke="#d5d5d5" stroke-width="1.6" d="M2 7 A5 5 0 0 1 10 3 M11 6 A5 5 0 0 1 3 10"/><path fill="#d5d5d5" d="M10 0 L11 4.5 L7 4 Z M2 12 L1 7.5 L5 8 Z"/></svg><div class="a" style="left:1782px;top:360px;width:1.5px;height:1.5px;background:#8a8a8a;"></div><div class="a" style="left:1785px;top:360px;width:1.5px;height:1.5px;background:#8a8a8a;"></div><div class="a" style="left:1788px;top:360px;width:1.5px;height:1.5px;background:#8a8a8a;"></div><div class="a" style="left:1791px;top:360px;width:1.5px;height:1.5px;background:#8a8a8a;"></div><div class="a" style="left:1794px;top:360px;width:1.5px;height:1.5px;background:#8a8a8a;"></div><div class="a" style="left:1797px;top:360px;width:1.5px;height:1.5px;background:#8a8a8a;"></div><svg class="a" style="left:1660px;top:364px" width="16" height="16" viewBox="0 0 16 16"><circle cx="8" cy="8" r="7.3" fill="none" stroke="#d5d5d5" stroke-width="1.1"/><path fill="none" stroke="#d5d5d5" stroke-width="1.2" d="M5.5 7.5 V6 A2.5 2.5 0 0 1 10.5 6"/><rect x="4" y="8" width="8" height="4.5" fill="#d5d5d5"/></svg><div class="tx" style="left:1682.00px;top:365.65px;font-size:14px;color:#d2d2d2;font-weight:400;transform:scaleX(1.0230);">Layers</div><svg class="a" style="left:1881px;top:366px" width="14" height="14" viewBox="0 0 14 14"><path fill="none" stroke="#d5d5d5" stroke-width="1.3" d="M1 6 H8 V13 H1 Z M5 6 V1 H13 V8 H8"/></svg><svg class="a" style="left:1904px;top:366px" width="12" height="12" viewBox="0 0 12 12"><path stroke="#d5d5d5" stroke-width="1.4" d="M1 1 L11 11 M11 1 L1 11"/></svg><div class="a" style="left:1660px;top:383px;width:225px;height:30px;border-radius:3px;background:#4a4a4a;border:1px solid #363636"></div><div class="tx" style="left:1665.00px;top:391.15px;font-size:14px;color:#d4d4d4;font-weight:400;transform:scaleX(0.9529);">Normal</div><svg class="a" style="left:1870px;top:395px" width="10" height="6" viewBox="0 0 10 6"><path fill="#b5b5b5" d="M0 0 H10 L5 5 Z"/></svg><svg class="a" style="left:1896px;top:389px" width="18" height="20" viewBox="0 0 18 20"><path fill="none" stroke="#d5d5d5" stroke-width="1.4" d="M1 1 H14 L9 8 V14 L6 12 V8 Z"/><path fill="#9a9a9a" d="M14 17 H18 L16 19 Z"/></svg><div class="a" style="left:1660px;top:417px;width:225px;height:29px;border-radius:3px;background:#3a3a3a;border:1px solid #363636"></div><div class="a" style="left:1660px;top:417px;width:211px;height:28px;background:#54718e;border-radius:2px 0 0 2px"></div><div class="a" style="left:1871px;top:418px;width:1px;height:27px;background:#2e2e2e;"></div><svg class="a" style="left:1873px;top:421px" width="10" height="20" viewBox="0 0 10 20"><path fill="#6a6a6a" d="M1 5 L5 1 L9 5 Z"/><path fill="#9a9a9a" d="M1 14 L5 18 L9 14 Z"/></svg><div class="tx" style="left:1722.00px;top:424.15px;font-size:14px;color:#e6e6e6;font-weight:400;transform:scaleX(0.9444);">Opacity:&nbsp; 100%</div><svg class="a" style="left:1897px;top:426px" width="16" height="16" viewBox="0 0 16 16"><g fill="#d5d5d5"><rect x="0" y="0" width="12" height="2"/><rect x="0" y="4" width="12" height="2"/><rect x="0" y="8" width="12" height="2"/></g><path fill="#9a9a9a" d="M12 14 H16 L14 16 Z"/></svg><div class="a" style="left:1659px;top:448px;width:260px;height:255px;background:#393939;"></div><div class="a" style="left:1659px;top:449px;width:45px;height:26px;background:#3e3e3e;"></div><div class="a" style="left:1704px;top:449px;width:214px;height:26px;background:#54718e;"></div><div class="a" style="left:1659px;top:476px;width:260px;height:26px;background:#3c3c3c;"></div><svg class="a" style="left:1664px;top:455px" width="14" height="14" viewBox="0 0 14 14"><path fill="none" stroke="#d5d5d5" stroke-width="1.1" d="M1 8 Q7 1 13 8 M1 9 Q7 15 13 9"/><circle cx="7" cy="7" r="3" fill="#d5d5d5"/></svg><svg class="a" style="left:1664px;top:482px" width="14" height="14" viewBox="0 0 14 14"><path fill="none" stroke="#d5d5d5" stroke-width="1.1" d="M1 8 Q7 1 13 8 M1 9 Q7 15 13 9"/><circle cx="7" cy="7" r="3" fill="#d5d5d5"/></svg><div class="a" style="left:1686px;top:456px;width:14px;height:14px;background:#303030;"></div><svg class="a" style="left:1688px;top:458px" width="10" height="10" viewBox="0 0 10 10"><path fill="none" stroke="#d5d5d5" stroke-width="1.5" d="M1 5 L4 9 L9 1"/></svg><div class="a" style="left:1686px;top:483px;width:14px;height:14px;background:#303030;"></div><div class="a" style="left:1707px;top:454px;width:22px;height:17px;background:#fff;border:1px solid #222;background:repeating-conic-gradient(#ddd 0 25%,#fff 0 50%) 0 0/6px 6px"></div><div class="a" style="left:1707px;top:482px;width:22px;height:16px;background:#fff;"></div><svg class="a" style="left:1735px;top:452px" width="11" height="11" viewBox="0 0 11 11"><path fill="none" stroke="#d5d5d5" stroke-width="1" d="M1 3 H5 M5 1 L9 1 V6 L6 9 H2 V8 M1 2 L6 7"/></svg><svg class="a" style="left:1735px;top:479px" width="11" height="11" viewBox="0 0 11 11"><path fill="none" stroke="#d5d5d5" stroke-width="1" d="M1 3 H5 M5 1 L9 1 V6 L6 9 H2 V8 M1 2 L6 7"/></svg><div class="tx" style="left:1752.00px;top:455.15px;font-size:14px;color:#e4e4e4;font-weight:700;transform:scaleX(0.9064);">Paint Layer 1</div><div class="tx" style="left:1752.00px;top:482.15px;font-size:14px;color:#d2d2d2;font-weight:400;transform:scaleX(0.9368);">Background</div><div class="a" style="left:1864px;top:458px;width:12px;height:11px;background:#7f98b2;clip-path:polygon(0 40%,60% 40%,60% 0,100% 10%,100% 100%,0 100%)"></div><svg class="a" style="left:1882px;top:455px" width="14" height="14" viewBox="0 0 14 14"><text x="0" y="12" font-family="Liberation Serif" font-style="italic" font-size="16" fill="#7f98b2">α</text></svg><div class="a" style="left:1900px;top:455px;width:16px;height:16px;background:repeating-conic-gradient(#6d87a2 0 25%,#8fa6bd 0 50%) 0 0/8px 8px;"></div><svg class="a" style="left:1864px;top:481px" width="12" height="14" viewBox="0 0 12 14"><path fill="none" stroke="#d5d5d5" stroke-width="1.6" d="M3 7 V5 A3 3 0 0 1 9 5 V7"/><rect x="1" y="7" width="10" height="7" fill="#d5d5d5"/></svg><svg class="a" style="left:1882px;top:482px" width="14" height="14" viewBox="0 0 14 14"><text x="0" y="12" font-family="Liberation Serif" font-style="italic" font-size="16" fill="#777">α</text></svg><div class="a" style="left:1900px;top:482px;width:16px;height:16px;background:repeating-conic-gradient(#4f4f4f 0 25%,#6a6a6a 0 50%) 0 0/8px 8px;"></div><svg class="a" style="left:1665px;top:709px" width="18" height="18" viewBox="0 0 18 18"><path stroke="#d5d5d5" stroke-width="1.6" d="M9 0 V18 M0 9 H18"/></svg><svg class="a" style="left:1691px;top:716px" width="8" height="5" viewBox="0 0 8 5"><path fill="#9a9a9a" d="M0 0 H8 L4 4 Z"/></svg><svg class="a" style="left:1708px;top:708px" width="20" height="20" viewBox="0 0 20 20"><path fill="none" stroke="#d5d5d5" stroke-width="1.5" d="M7 1 H19 V13 H7 Z M4 4 V16 H16"/></svg><svg class="a" style="left:1740px;top:712px" width="21" height="13" viewBox="0 0 21 13"><path fill="none" stroke="#d5d5d5" stroke-width="1.6" d="M1 1 L10 11 L20 1"/></svg><svg class="a" style="left:1772px;top:711px" width="21" height="13" viewBox="0 0 21 13"><path fill="none" stroke="#d5d5d5" stroke-width="1.6" d="M1 12 L10 2 L20 12"/></svg><svg class="a" style="left:1804px;top:709px" width="20" height="18" viewBox="0 0 20 18"><g stroke="#d5d5d5" stroke-width="1.5"><path d="M0 3 H20 M0 9 H20 M0 15 H20"/></g><g fill="#d5d5d5"><circle cx="15" cy="3" r="1.8"/><circle cx="5" cy="9" r="1.8"/><circle cx="9" cy="15" r="1.8"/></g></svg><svg class="a" style="left:1831px;top:716px" width="8" height="5" viewBox="0 0 8 5"><path fill="#9a9a9a" d="M0 0 H8 L4 4 Z"/></svg><svg class="a" style="left:1895px;top:707px" width="19" height="21" viewBox="0 0 19 21"><path fill="#d5d5d5" d="M2 6 H17 L16 19 Q16 20 15 20 H4 Q3 20 3 19 Z"/><path fill="none" stroke="#d5d5d5" stroke-width="1.4" d="M0 4 H19 M7 3 V1 H12 V3"/></svg><div class="a" style="left:1782px;top:736px;width:1.5px;height:1.5px;background:#8a8a8a;"></div><div class="a" style="left:1785px;top:736px;width:1.5px;height:1.5px;background:#8a8a8a;"></div><div class="a" style="left:1788px;top:736px;width:1.5px;height:1.5px;background:#8a8a8a;"></div><div class="a" style="left:1791px;top:736px;width:1.5px;height:1.5px;background:#8a8a8a;"></div><div class="a" style="left:1794px;top:736px;width:1.5px;height:1.5px;background:#8a8a8a;"></div><div class="a" style="left:1797px;top:736px;width:1.5px;height:1.5px;background:#8a8a8a;"></div><svg class="a" style="left:1660px;top:740px" width="16" height="16" viewBox="0 0 16 16"><circle cx="8" cy="8" r="7.3" fill="none" stroke="#d5d5d5" stroke-width="1.1"/><path fill="none" stroke="#d5d5d5" stroke-width="1.2" d="M5.5 7.5 V6 A2.5 2.5 0 0 1 10.5 6"/><rect x="4" y="8" width="8" height="4.5" fill="#d5d5d5"/></svg><div class="tx" style="left:1682.00px;top:741.65px;font-size:14px;color:#d2d2d2;font-weight:400;transform:scaleX(1.0007);">Brush Presets</div><svg class="a" style="left:1881px;top:742px" width="14" height="14" viewBox="0 0 14 14"><path fill="none" stroke="#d5d5d5" stroke-width="1.3" d="M1 6 H8 V13 H1 Z M5 6 V1 H13 V8 H8"/></svg><svg class="a" style="left:1904px;top:742px" width="12" height="12" viewBox="0 0 12 12"><path stroke="#d5d5d5" stroke-width="1.4" d="M1 1 L11 11 M11 1 L1 11"/></svg><div class="a" style="left:1660px;top:759px;width:155px;height:25px;border-radius:3px;background:#4a4a4a;border:1px solid #363636"></div><div class="tx" style="left:1664.00px;top:764.65px;font-size:14px;color:#d4d4d4;font-weight:400;transform:scaleX(0.8876);">Sketch</div><svg class="a" style="left:1800px;top:770px" width="10" height="6" viewBox="0 0 10 6"><path fill="#b5b5b5" d="M0 0 H10 L5 5 Z"/></svg><div class="a" style="left:1817px;top:760px;width:53px;height:23px;border-radius:3px;background:#4a4a4a;border:1px solid #363636"></div><svg class="a" style="left:1822px;top:763px" width="10" height="17" viewBox="0 0 10 17"><path fill="none" stroke="#d5d5d5" stroke-width="1.5" d="M1 1 H9 V16 L5 12 L1 16 Z"/></svg><div class="tx" style="left:1837.00px;top:764.65px;font-size:14px;color:#d4d4d4;font-weight:400;transform:scaleX(0.9301);">Tag</div><svg class="a" style="left:1862px;top:776px" width="5" height="3" viewBox="0 0 5 3"><path fill="#9a9a9a" d="M0 0 H5 L2.5 3 Z"/></svg><svg class="a" style="left:1877px;top:765px" width="12" height="12" viewBox="0 0 12 12"><g fill="#d5d5d5"><rect x="0" y="0" width="12" height="2"/><rect x="0" y="4" width="12" height="2"/><rect x="0" y="8" width="12" height="2"/></g></svg><svg class="a" style="left:1899px;top:763px" width="16" height="16" viewBox="0 0 16 16"><path fill="none" stroke="#d5d5d5" stroke-width="1.1" d="M0.5 0.5 H15.5 V15.5 H0.5 Z"/><path fill="none" stroke="#d5d5d5" stroke-width="0.8" d="M10 1 L11 2 L10 3 L11 4 L10 5 L11 6"/></svg><div class="a" style="left:1660px;top:786px;width:242px;height:353px;background:#353535;"></div><svg width="0" height="0" style="position:absolute"><defs><pattern id="chk" width="6" height="6" patternUnits="userSpaceOnUse"><rect width="6" height="6" fill="#f2f2f2"/><rect width="3" height="3" fill="#a6a6a6"/><rect x="3" y="3" width="3" height="3" fill="#a6a6a6"/></pattern><pattern id="grain" width="14" height="14" patternUnits="userSpaceOnUse"><g fill="#111"><rect x="5" y="2" width="1" height="1"/><rect x="6" y="10" width="1" height="1"/><rect x="0" y="1" width="1" height="1"/><rect x="13" y="8" width="1" height="1"/><rect x="1" y="5" width="1" height="1"/><rect x="9" y="0" width="1" height="1"/><rect x="8" y="3" width="1" height="1"/><rect x="0" y="1" width="1" height="1"/><rect x="6" y="6" width="1" height="1"/><rect x="1" y="3" width="1" height="1"/><rect x="1" y="8" width="1" height="1"/><rect x="6" y="0" width="1" height="1"/><rect x="13" y="9" width="1" height="1"/><rect x="1" y="3" width="1" height="1"/><rect x="10" y="10" width="1" height="1"/><rect x="9" y="0" width="1" height="1"/><rect x="9" y="9" width="1" height="1"/><rect x="6" y="0" width="1" height="1"/><rect x="3" y="0" width="1" height="1"/><rect x="8" y="13" width="1" height="1"/><rect x="2" y="4" width="1" height="1"/><rect x="6" y="2" width="1" height="1"/><rect x="8" y="1" width="1" height="1"/><rect x="9" y="4" width="1" height="1"/><rect x="8" y="13" width="1" height="1"/><rect x="10" y="2" width="1" height="1"/><rect x="1" y="9" width="1" height="1"/><rect x="9" y="10" width="1" height="1"/><rect x="3" y="5" width="1" height="1"/><rect x="1" y="8" width="1" height="1"/><rect x="11" y="1" width="1" height="1"/><rect x="9" y="0" width="1" height="1"/><rect x="9" y="3" width="1" height="1"/><rect x="7" y="10" width="1" height="1"/><rect x="8" y="6" width="1" height="1"/><rect x="12" y="5" width="1" height="1"/><rect x="7" y="9" width="1" height="1"/><rect x="7" y="5" width="1" height="1"/><rect x="4" y="3" width="1" height="1"/><rect x="12" y="2" width="1" height="1"/><rect x="11" y="12" width="1" height="1"/><rect x="3" y="1" width="1" height="1"/><rect x="9" y="4" width="1" height="1"/><rect x="8" y="7" width="1" height="1"/><rect x="5" y="11" width="1" height="1"/><rect x="7" y="4" width="1" height="1"/><rect x="9" y="1" width="1" height="1"/><rect x="1" y="8" width="1" height="1"/><rect x="6" y="2" width="1" height="1"/><rect x="12" y="5" width="1" height="1"/><rect x="2" y="7" width="1" height="1"/><rect x="6" y="0" width="1" height="1"/><rect x="10" y="1" width="1" height="1"/><rect x="12" y="8" width="1" height="1"/><rect x="9" y="12" width="1" height="1"/><rect x="13" y="5" width="1" height="1"/><rect x="5" y="11" width="1" height="1"/><rect x="5" y="9" width="1" height="1"/><rect x="7" y="9" width="1" height="1"/><rect x="12" y="7" width="1" height="1"/><rect x="1" y="13" width="1" height="1"/><rect x="1" y="4" width="1" height="1"/><rect x="7" y="11" width="1" height="1"/><rect x="10" y="1" width="1" height="1"/><rect x="0" y="11" width="1" height="1"/><rect x="11" y="4" width="1" height="1"/><rect x="10" y="9" width="1" height="1"/><rect x="10" y="13" width="1" height="1"/><rect x="7" y="4" width="1" height="1"/><rect x="11" y="6" width="1" height="1"/></g></pattern><linearGradient id="gstroke" x1="0" x2="1"><stop offset="0" stop-color="#c4c4c4"/><stop offset="1" stop-color="#2a2a2a"/></linearGradient><linearGradient id="gstroke2" x1="0" x2="1"><stop offset="0" stop-color="#d0d0d0"/><stop offset="0.5" stop-color="#8a8a8a"/><stop offset="1" stop-color="#222"/></linearGradient><linearGradient id="silver" x1="0" y1="0" x2="1" y2="1"><stop offset="0" stop-color="#f4f4f4"/><stop offset="1" stop-color="#9a9a9a"/></linearGradient></defs></svg><div class="a" style="left:1661px;top:787px;width:58px;height:58px;background:#d3d3d3;overflow:hidden"><svg width="58" height="58" viewBox="0 0 58 58" style="display:block"><path d="M26.5 8.5 L35.5 0.0 L58.0 0.0 L58.0 16.2 L40.6 30.3 L40.6 21.4 Z" fill="#3e6196" /><path d="M40.6 21.4 L58.0 6.0 L58.0 16.2 L40.6 30.3 Z" fill="#2d4a78" /><path d="M19.4 14.3 L26.5 8.5 L40.6 21.4 L40.0 30.3 L31.0 38.0 L18.8 26.5 Z" fill="#f6f6f6" /><path d="M40.6 21.4 L40.0 30.3 L31.0 38.0 L31.0 29.0 Z" fill="#d6d6d6" /><path d="M11.0 36.0 C11.1 38.0 8.9 45.0 11.5 48.0 C14.1 51.0 21.4 53.7 26.5 54.0 C31.6 54.3 37.2 52.0 42.0 50.0 C46.8 48.0 52.8 43.3 55.0 42.0" fill="none" stroke="url(#chk)" stroke-width="9" stroke-linecap="round" opacity="0.9"/></svg></div><div class="a" style="left:1721px;top:787px;width:58px;height:58px;background:#d3d3d3;overflow:hidden"><svg width="58" height="58" viewBox="0 0 58 58" style="display:block"><path d="M30.4 31.1 L61.7 6.7 L54.3 -2.7 L23.1 21.6 Z" fill="#3b5fc8" /><path d="M29.41991084333747 26.509309083158026 L59.105093104326855 3.4208339912773873" stroke="#ffffff" stroke-width="1.7999999999999998" stroke-linecap="butt" opacity="0.25"/><path d="M22.2 29.1 L26.7 24.6 L34.4 32.9 L29.3 35.5 Z" fill="#eeeeee" /><path d="M20.3 38.0 C20.4 39.7 19.5 45.9 21.0 48.0 C22.5 50.1 26.5 51.1 29.3 50.8 C32.1 50.5 35.2 47.9 38.0 46.0 C40.8 44.1 44.7 40.4 46.0 39.3" fill="none" stroke="url(#chk)" stroke-width="5" stroke-linecap="round" /></svg></div><div class="a" style="left:1781px;top:787px;width:58px;height:58px;background:#d3d3d3;overflow:hidden"><svg width="58" height="58" viewBox="0 0 58 58" style="display:block"><path d="M23.2 30.3 C23.6 27.9 23.6 20.9 25.7 16.2 C27.8 11.5 33.0 4.8 36.0 2.1 C39.0 -0.6 40.4 0.4 44.0 0.0 C47.6 -0.4 55.5 -4.2 57.8 0.0 C60.1 4.2 60.1 19.7 57.8 25.2 C55.4 30.7 48.8 31.2 43.7 32.9 C38.6 34.6 30.4 35.9 27.0 35.5 C23.6 35.1 23.8 31.2 23.2 30.3" fill="#7c7d81"/><path d="M6.0 37.0 C8.0 38.5 14.0 44.0 18.0 46.0 C22.0 48.0 25.7 48.3 30.0 49.0 C34.3 49.7 41.4 49.8 43.7 50.0" fill="none" stroke="url(#chk)" stroke-width="10" stroke-linecap="round" opacity="0.5"/></svg></div><div class="a" style="left:1841px;top:787px;width:58px;height:58px;background:#d3d3d3;overflow:hidden"><svg width="58" height="58" viewBox="0 0 58 58" style="display:block"><path d="M32.5 32.0 L61.1 5.3 L54.9 -1.3 L26.3 25.4 Z" fill="#2a2a2a" /><path d="M31.79450753811883 28.30006780633614 L58.92103167567129 2.987016034525348" stroke="#ffffff" stroke-width="1.3499999999999999" stroke-linecap="butt" opacity="0.25"/><path d="M22.1 35.5 L32.5 32.0 L26.3 25.4 Z" fill="#c8c8c8" /><path d="M22.1 35.5 L24.2 34.8 L22.9 33.5 Z" fill="#333" /><path d="M21.0 47.0 C21.6 47.9 21.3 52.0 24.7 52.2 C28.1 52.4 35.9 50.7 41.4 48.3 C46.9 45.9 55.2 39.7 58.0 38.0" fill="none" stroke="#1f1f22" stroke-width="7" stroke-linecap="round" /></svg></div><div class="a" style="left:1661px;top:847px;width:58px;height:58px;background:#d3d3d3;overflow:hidden"><svg width="58" height="58" viewBox="0 0 58 58" style="display:block"><path d="M38.1 31.4 L63.7 5.6 L52.3 -5.6 L26.8 20.1 Z" fill="#1e1e1e" /><path d="M35.57007272689164 26.028536126359057 L59.70420167960998 1.6898806570922476" stroke="#ffffff" stroke-width="2.4" stroke-linecap="butt" opacity="0.25"/><path d="M22.6 35.7 L38.1 31.4 L26.8 20.1 Z" fill="#2c2c2c" /><path d="M16.2 42.1 C17.1 43.6 18.2 49.4 21.4 51.1 C24.6 52.8 29.4 53.7 35.5 52.4 C41.6 51.1 54.2 44.9 58.0 43.4" fill="none" stroke="url(#gstroke)" stroke-width="6" stroke-linecap="round" /></svg></div><div class="a" style="left:1721px;top:847px;width:58px;height:58px;background:#d3d3d3;overflow:hidden"><svg width="58" height="58" viewBox="0 0 58 58" style="display:block"><path d="M37.6 30.8 L63.0 4.9 L53.0 -4.9 L27.6 21.0 Z" fill="#c8c8c8" /><path d="M35.49758573391293 25.969199534341048 L59.50006430206541 1.469628214777128" stroke="#ffffff" stroke-width="2.1" stroke-linecap="butt" opacity="0.25"/><path d="M24.2 34.5 L37.6 30.8 L27.6 21.0 Z" fill="url(#silver)" /><path d="M24.2 34.5 L26.4 33.9 L24.8 32.3 Z" fill="#777" /><path d="M30 25 L33 28" stroke="#d07a30" stroke-width="1.5" stroke-linecap="butt" /><path d="M15.2 43.4 C16.1 44.5 16.7 49.7 20.3 49.9 C23.9 50.1 30.7 45.6 37.0 44.8 C43.3 43.9 54.5 44.8 58.0 44.8" fill="none" stroke="url(#gstroke2)" stroke-width="7" stroke-linecap="round" /></svg></div><div class="a" style="left:1781px;top:847px;width:58px;height:58px;background:#d3d3d3;overflow:hidden"><svg width="58" height="58" viewBox="0 0 58 58" style="display:block"><path d="M36.6 32.0 L63.0 4.9 L53.0 -4.9 L26.6 22.2 Z" fill="#7d7d7d" /><path d="M34.47608033355307 27.140793710205514 L59.50375819166173 1.465848321283702" stroke="#ffffff" stroke-width="2.1" stroke-linecap="butt" opacity="0.25"/><path d="M23.2 35.7 L36.6 32.0 L26.6 22.2 Z" fill="url(#silver)" /><path d="M23.2 35.7 L25.4 35.1 L23.8 33.5 Z" fill="#777" /><path d="M16.7 43.4 C17.6 44.5 18.5 49.7 21.9 49.9 C25.3 50.1 33.7 44.8 37.3 44.8 C40.9 44.8 40.3 50.3 43.7 49.9 C47.1 49.5 55.4 43.4 57.8 42.1" fill="none" stroke="#8a8a8a" stroke-width="8" stroke-linecap="round" opacity="0.75"/></svg></div><div class="a" style="left:1841px;top:847px;width:58px;height:58px;background:#d3d3d3;overflow:hidden"><svg width="58" height="58" viewBox="0 0 58 58" style="display:block"><path d="M31.1 27.0 L60.0 2.3 L56.0 -2.3 L27.2 22.5 Z" fill="#777" /><path d="M31.254326483442505 24.12072896875339 L58.58586346809477 0.6832012856779197" stroke="#ffffff" stroke-width="1" stroke-linecap="butt" opacity="0.25"/><path d="M20.8 31.9 L31.1 27.0 L27.2 22.5 Z" fill="#3a2420" /><path d="M32.3 20.3 L47.8 6.2" stroke="#c9bfd6" stroke-width="6" stroke-linecap="butt" /><path d="M19.5 37.0 C19.7 38.5 19.1 44.7 20.8 46.0 C22.5 47.3 27.4 45.4 29.8 44.8 C32.2 44.1 33.7 41.5 35.0 42.1 C36.3 42.7 35.4 47.6 37.5 48.5 C39.6 49.4 44.4 48.7 47.8 47.2 C51.2 45.7 56.3 40.8 58.0 39.5" fill="none" stroke="#262626" stroke-width="4.5" stroke-linecap="round" /></svg></div><div class="a" style="left:1661px;top:907px;width:58px;height:58px;background:#d3d3d3;overflow:hidden"><svg width="58" height="58" viewBox="0 0 58 58" style="display:block"><path d="M32.8 26.4 L60.3 2.6 L55.7 -2.6 L28.2 21.1 Z" fill="#e39b2c" /><path d="M32.7267004742708 23.274426572113295 L58.687352942856 0.7937543271990358" stroke="#ffffff" stroke-width="1.05" stroke-linecap="butt" opacity="0.25"/><path d="M20.7 32.3 L32.8 26.4 L28.2 21.1 Z" fill="#5a3a2e" /><path d="M34.2 20.1 L48.3 6" stroke="#cfc4dc" stroke-width="7" stroke-linecap="butt" /><path d="M18.8 38.0 C19.4 39.3 20.7 45.3 22.6 45.7 C24.5 46.1 28.2 39.8 30.3 40.6 C32.5 41.5 30.9 51.0 35.5 50.8 C40.1 50.6 54.2 41.2 58.0 39.3" fill="none" stroke="url(#gstroke)" stroke-width="6" stroke-linecap="round" /></svg></div><div class="a" style="left:1721px;top:907px;width:58px;height:58px;background:#d3d3d3;overflow:hidden"><svg width="58" height="58" viewBox="0 0 58 58" style="display:block"><path d="M33.5 28.1 L60.1 2.1 L55.9 -2.1 L29.3 23.8 Z" fill="#e2882a" /><path d="M33.42674456625513 25.174899048615515 L58.627751905072984 0.6449244495886606" stroke="#ffffff" stroke-width="1" stroke-linecap="butt" opacity="0.25"/><path d="M24.2 32.9 L33.5 28.1 L29.3 23.8 Z" fill="#5a2e28" /><path d="M31.9 23.9 L43.4 13.7" stroke="#cfc4dc" stroke-width="5" stroke-linecap="butt" /><path d="M14.0 50.8 C15.0 49.3 18.1 43.5 20.0 42.0 C21.9 40.5 23.8 40.6 25.5 41.9 C27.2 43.2 28.5 48.5 30.0 50.0 C31.5 51.5 29.7 52.8 34.4 50.8 C39.1 48.8 54.1 40.1 58.0 38.0" fill="none" stroke="url(#gstroke)" stroke-width="2" stroke-linecap="round" /></svg></div><div class="a" style="left:1781px;top:907px;width:58px;height:58px;background:#d3d3d3;overflow:hidden"><svg width="58" height="58" viewBox="0 0 58 58" style="display:block"><path d="M36.2 30.3 L62.8 5.1 L53.2 -5.1 L26.5 20.2 Z" fill="#3c7fe2" /><path d="M34.23355401920004 25.408330917540493 L59.44426376061264 1.5245006362022357" stroke="#ffffff" stroke-width="2.1" stroke-linecap="butt" opacity="0.25"/><path d="M21.9 34.2 L36.2 30.3 L26.5 20.2 Z" fill="#ecd6a6" /><path d="M21.9 34.2 L26.3 33.0 L23.3 29.9 Z" fill="#1d2333" /><circle cx="16.1" cy="15" r="4.6" fill="none" stroke="#a8a8a8" stroke-width="0.7"/><path d="M18.1 39.3 C18.5 41.2 18.6 48.9 20.7 50.8 C22.8 52.7 27.7 51.6 30.9 50.8 C34.1 49.9 35.3 46.6 39.8 45.7 C44.3 44.9 54.8 45.7 57.8 45.7" fill="none" stroke="#999" stroke-width="1" stroke-linecap="round" /></svg></div><div class="a" style="left:1840px;top:906px;width:60px;height:60px;background:#5a7896"></div><div class="a" style="left:1844px;top:910px;width:52px;height:52px;background:#86b5d8"></div><svg class="a" style="left:1841px;top:907px" width="58" height="58" viewBox="0 0 58 58"><path d="M33.8 30.7 L57.7 9.1 L50.3 0.9 L26.5 22.5 Z" fill="#2b4778" /><path d="M32.740837419486894 26.4928759482642 L55.10800705081912 6.222628469869371" stroke="#ffffff" stroke-width="1.65" stroke-linecap="butt" opacity="0.25"/><path d="M22.0 34.0 L33.8 30.7 L26.5 22.5 Z" fill="#a6d6d4" /><path d="M22.0 34.0 L26.3 32.8 L23.6 29.8 Z" fill="#1b2a4a" /><path d="M39 15 L44 21" stroke="#c03040" stroke-width="1.5"/><path d="M20 39 Q12 50 22 51 Q32 50 38 45 Q44 40 45 46 Q46 54 55 48" fill="none" stroke="#23324f" stroke-width="1.5"/></svg><div class="a" style="left:1661px;top:967px;width:58px;height:58px;background:#d3d3d3;overflow:hidden"><svg width="58" height="58" viewBox="0 0 58 58" style="display:block"><path d="M41.5 28.6 L64.3 6.5 L51.7 -6.5 L29.0 15.7 Z" fill="#c0a594" /><path d="M38.55242525597463 22.68030695827617 L59.88244870492052 1.935558542990381" stroke="#ffffff" stroke-width="2.6999999999999997" stroke-linecap="butt" opacity="0.25"/><path d="M25.2 31.9 L41.5 28.6 L29.0 15.7 Z" fill="#eee0b4" /><path d="M25.2 31.9 L29.9 31.0 L26.3 27.3 Z" fill="#1e2a3a" /><path d="M20.1 38.3 C20.5 40.2 20.0 47.5 22.6 49.9 C25.2 52.2 29.6 53.5 35.5 52.4 C41.4 51.3 54.2 44.9 58.0 43.4" fill="none" stroke="#333" stroke-width="4" stroke-linecap="round" stroke-dasharray="1 0.6"/></svg></div><div class="a" style="left:1721px;top:967px;width:58px;height:58px;background:#d3d3d3;overflow:hidden"><svg width="58" height="58" viewBox="0 0 58 58" style="display:block"><path d="M34.8 32.3 L62.3 4.2 L53.7 -4.2 L26.2 23.9 Z" fill="#bdbdbd" /><path d="M33.183821955364834 27.902201649466335 L59.28576940177035 1.2596813269518239" stroke="#ffffff" stroke-width="1.7999999999999998" stroke-linecap="butt" opacity="0.25"/><path d="M24.2 34.5 L34.8 32.3 L26.2 23.9 Z" fill="#555" /><path d="M34 24 L38 28" stroke="#888" stroke-width="3" stroke-linecap="butt" /><path d="M15.2 39.6 C15.4 41.3 13.5 48.8 16.5 49.9 C19.5 51.0 27.2 47.9 33.2 46.0 C39.2 44.1 48.3 37.9 52.4 38.3 C56.5 38.7 57.1 46.8 58.0 48.5" fill="none" stroke="#777" stroke-width="2" stroke-linecap="round" /></svg></div><div class="a" style="left:1781px;top:967px;width:58px;height:58px;background:#d3d3d3;overflow:hidden"><svg width="58" height="58" viewBox="0 0 58 58" style="display:block"><path d="M11 12 Q15 7 20 11 M20 17 Q15 20 11 15" fill="none" stroke="#666" stroke-width="2.2"/><path d="M19 10 L21 12 L18 13 Z M12 17 L10 15 L13 14 Z" fill="#666"/><path d="M35.5 29.0 L59.8 19.7 L56.2 10.3 L31.9 19.6 Z" fill="#e6c22e" /><path d="M36.08053555701726 24.986878292011166 L58.53570619939989 16.401077752276628" stroke="#ffffff" stroke-width="1.5" stroke-linecap="butt" opacity="0.25"/><path d="M20.6 29.3 L35.5 29.0 L31.9 19.6 Z" fill="#d6b88a" /><path d="M20.6 29.3 L27.0 29.2 L25.4 25.2 Z" fill="#222" /><path d="M6.5 43.4 C8.4 41.3 12.5 32.2 18.1 31.0 C23.7 29.8 33.4 34.3 40.0 36.0 C46.6 37.7 57.8 39.3 57.8 41.0 C57.8 42.7 46.6 45.0 40.0 46.0 C33.4 47.0 23.7 47.7 18.1 47.3 C12.5 46.9 8.4 44.0 6.5 43.4" fill="url(#grain)" opacity="0.9"/><path d="M6.5 43.4 C8.4 41.3 12.5 32.2 18.1 31.0 C23.7 29.8 33.4 34.3 40.0 36.0 C46.6 37.7 57.8 39.3 57.8 41.0 C57.8 42.7 46.6 45.0 40.0 46.0 C33.4 47.0 23.7 47.7 18.1 47.3 C12.5 46.9 8.4 44.0 6.5 43.4" fill="#777" opacity="0.35"/></svg></div><div class="a" style="left:1841px;top:967px;width:58px;height:58px;background:#d3d3d3;overflow:hidden"><svg width="58" height="58" viewBox="0 0 58 58" style="display:block"><path d="M34.1 25.7 L61.1 3.9 L54.9 -3.9 L27.8 17.9 Z" fill="#2f6b34" /><path d="M33.43085771879125 21.698811560604412 L58.940462165850505 1.1685593329411121" stroke="#ffffff" stroke-width="1.5" stroke-linecap="butt" opacity="0.25"/><path d="M24.7 26.8 L34.1 25.7 L27.8 17.9 Z" fill="#e8cfa0" /><path d="M24.7 26.8 L28.2 26.4 L25.9 23.5 Z" fill="#1d2333" /><path d="M36.6 30.6 L61.2 9.8 L54.8 2.2 L30.2 22.9 Z" fill="#2a6430" /><path d="M35.910536521063115 26.59823983761634 L58.9672382357765 7.146494742792991" stroke="#ffffff" stroke-width="1.5" stroke-linecap="butt" opacity="0.25"/><path d="M27.3 31.9 L36.6 30.6 L30.2 22.9 Z" fill="#e8cfa0" /><path d="M27.3 31.9 L30.8 31.4 L28.4 28.5 Z" fill="#1d2333" /><path d="M40.4 34.7 L61.1 17.9 L54.9 10.1 L34.1 26.9 Z" fill="#2f6b34" /><path d="M39.722799633250716 30.685044813670295 L58.942304420242145 15.167074281951285" stroke="#ffffff" stroke-width="1.5" stroke-linecap="butt" opacity="0.25"/><path d="M31.0 35.8 L40.4 34.7 L34.1 26.9 Z" fill="#e8cfa0" /><path d="M31.0 35.8 L34.5 35.4 L32.2 32.5 Z" fill="#1d2333" /><path d="M8.0 34.5 C10.0 35.1 16.0 35.8 20.0 38.0 C24.0 40.2 28.0 47.0 32.0 48.0 C36.0 49.0 39.7 45.3 44.0 44.0 C48.3 42.7 55.7 38.0 58.0 40.0 C60.3 42.0 61.0 53.0 58.0 56.0 C55.0 59.0 46.3 58.3 40.0 58.0 C33.7 57.7 25.3 56.3 20.0 54.0 C14.7 51.7 10.0 47.2 8.0 44.0 C6.0 40.8 8.0 36.1 8.0 34.5" fill="url(#grain)"/><path d="M8.0 34.5 C10.0 35.1 16.0 35.8 20.0 38.0 C24.0 40.2 28.0 47.0 32.0 48.0 C36.0 49.0 39.7 45.3 44.0 44.0 C48.3 42.7 55.7 38.0 58.0 40.0 C60.3 42.0 61.0 53.0 58.0 56.0 C55.0 59.0 46.3 58.3 40.0 58.0 C33.7 57.7 25.3 56.3 20.0 54.0 C14.7 51.7 10.0 47.2 8.0 44.0 C6.0 40.8 8.0 36.1 8.0 34.5" fill="#333" opacity="0.45"/></svg></div><div class="a" style="left:1661px;top:1027px;width:58px;height:58px;background:#d3d3d3;overflow:hidden"><svg width="58" height="58" viewBox="0 0 58 58" style="display:block"><path d="M33.1 29.9 L60.5 2.5 L55.5 -2.5 L28.1 25.0 Z" fill="#707070" /><path d="M32.77931058637875 26.791586386359707 L58.74368831446443 0.7412338975850062" stroke="#ffffff" stroke-width="1.05" stroke-linecap="butt" opacity="0.25"/><path d="M27.8 30.3 L33.1 29.9 L28.1 25.0 Z" fill="#c8c8a0" /><path d="M30.3 26.5 L41.9 15" stroke="#c9bbd6" stroke-width="9" stroke-linecap="butt" /><circle cx="26.5" cy="30.5" r="6" fill="#c6c2a2"/><path d="M11.1 34.2 C11.5 36.1 11.1 42.9 13.7 45.7 C16.3 48.5 24.4 49.9 26.5 50.8" fill="none" stroke="#111" stroke-width="8" stroke-linecap="round" /><path d="M26.0 48.0 C28.3 47.0 34.7 42.0 40.0 42.0 C45.3 42.0 55.0 47.2 58.0 48.3" fill="none" stroke="#999" stroke-width="6" stroke-linecap="round" opacity="0.8"/></svg></div><div class="a" style="left:1721px;top:1027px;width:58px;height:58px;background:#d3d3d3;overflow:hidden"><svg width="58" height="58" viewBox="0 0 58 58" style="display:block"><path d="M31.9 15 L58 0" stroke="#b9b0c6" stroke-width="14" stroke-linecap="butt" /><path d="M20.3 22.6 L31.9 12.0 L44.0 26.5 L31.9 38.0 Z" fill="#d8cca2" /><path d="M20.3 22.6 L31.9 38.0 L28.0 40.0 L18.0 26.0 Z" fill="#555" opacity="0.6"/><path d="M8.8 44.4 C9.7 45.5 9.9 49.5 14.0 50.8 C18.1 52.1 25.9 51.9 33.2 52.1 C40.5 52.3 53.9 52.1 58.0 52.1" fill="none" stroke="#333" stroke-width="6" stroke-linecap="round" /></svg></div><div class="a" style="left:1781px;top:1027px;width:58px;height:58px;background:#d3d3d3;overflow:hidden"><svg width="58" height="58" viewBox="0 0 58 58" style="display:block"><path d="M23.2 22.6 C24.1 19.6 25.5 8.5 28.3 4.7 C31.1 0.9 35.1 0.8 40.0 0.0 C44.9 -0.8 54.8 -3.1 57.8 0.0 C60.8 3.1 61.0 14.0 57.8 18.8 C54.6 23.6 43.9 27.1 38.5 29.0 C33.1 30.9 28.2 31.4 25.7 30.3 C23.1 29.2 23.6 23.9 23.2 22.6" fill="#2a2a2a"/><path d="M5.2 38.0 C6.7 38.2 11.2 38.5 14.0 39.0 C16.8 39.5 20.7 40.7 22.0 41.0" fill="none" stroke="#999" stroke-width="10" stroke-linecap="round" opacity="0.8"/><path d="M23.2 45.7 C26.0 45.8 34.2 45.8 40.0 46.0 C45.8 46.2 54.8 46.8 57.8 47.0" fill="none" stroke="url(#grain)" stroke-width="10" stroke-linecap="round" /><path d="M23.2 45.7 C26.0 45.8 34.2 45.8 40.0 46.0 C45.8 46.2 54.8 46.8 57.8 47.0" fill="none" stroke="#1a1a1a" stroke-width="9" stroke-linecap="round" opacity="0.8"/></svg></div><div class="a" style="left:1841px;top:1027px;width:58px;height:58px;background:#d3d3d3;overflow:hidden"><svg width="58" height="58" viewBox="0 0 58 58" style="display:block"><path d="M40 16.2 L58 0" stroke="#555" stroke-width="5" stroke-linecap="butt" /><path d="M40 16 L47 34 L42 39" fill="none" stroke="#888" stroke-width="1.2"/><path d="M17 15 L37.5 36.8" stroke="#f2f2f2" stroke-width="11" stroke-linecap="butt" /><path d="M8.0 34.2 C8.2 37.0 7.0 48.0 9.3 50.8 C11.7 53.6 14.0 49.9 22.1 50.8 C30.2 51.7 52.0 55.1 58.0 56.0" fill="none" stroke="#666" stroke-width="11" stroke-linecap="round" opacity="0.85"/></svg></div><div class="a" style="left:1661px;top:1087px;width:58px;height:52px;background:#d3d3d3;overflow:hidden"><svg width="58" height="58" viewBox="0 0 58 58" style="display:block"><path d="M49.6 5 L58 0" stroke="#222" stroke-width="8" stroke-linecap="butt" /><path d="M35.5 16.6 L49.6 5" stroke="#c9bbd6" stroke-width="8" stroke-linecap="butt" /><circle cx="30.3" cy="26.8" r="6" fill="#d8c8a0"/><path d="M13.7 37.0 C15.6 37.8 21.4 40.5 25.0 42.0 C28.6 43.5 30.3 44.9 35.5 46.0 C40.7 47.1 52.6 48.1 56.0 48.5" fill="none" stroke="#111" stroke-width="2.5" stroke-linecap="round" /><path d="M15.0 43.0 C17.5 43.5 24.2 44.5 30.0 46.0 C35.8 47.5 46.7 51.0 50.0 52.0" fill="none" stroke="#111" stroke-width="2" stroke-linecap="round" /><path d="M18.0 50.0 C20.3 50.2 26.0 50.2 32.0 51.0 C38.0 51.8 50.3 54.3 54.0 55.0" fill="none" stroke="#222" stroke-width="2" stroke-linecap="round" /></svg></div><div class="a" style="left:1721px;top:1087px;width:58px;height:52px;background:#d3d3d3;overflow:hidden"><svg width="58" height="58" viewBox="0 0 58 58" style="display:block"><path d="M31.8 32.0 L62.6 5.3 L53.4 -5.3 L22.6 21.4 Z" fill="#6aa642" /><path d="M30.109224749848998 26.95669830030957 L59.37553285233688 1.5867921641292388" stroke="#ffffff" stroke-width="2.1" stroke-linecap="butt" opacity="0.25"/><path d="M24.2 29.3 L31.8 32.0 L22.6 21.4 Z" fill="#7cbc4c" /><path d="M15.2 58.0 C16.0 55.7 17.5 46.7 20.0 44.0 C22.5 41.3 26.7 42.7 30.0 42.0 C33.3 41.3 35.3 41.0 40.0 40.0 C44.7 39.0 55.0 33.0 58.0 36.0 C61.0 39.0 65.1 54.3 58.0 58.0 C50.9 61.7 22.3 58.0 15.2 58.0" fill="url(#grain)"/><path d="M34 52 Q38 42 58 38 V52 Z" fill="#1a1a1a" opacity="0.85"/></svg></div><div class="a" style="left:1781px;top:1087px;width:58px;height:52px;background:#d3d3d3;overflow:hidden"><svg width="58" height="58" viewBox="0 0 58 58" style="display:block"><path d="M29.4 32.2 L62.4 5.4 L53.6 -5.4 L20.6 21.3 Z" fill="#c98f52" /><path d="M27.88205118219445 27.149403884127484 L59.32339412950931 1.6305299684397991" stroke="#ffffff" stroke-width="2.1" stroke-linecap="butt" opacity="0.25"/><path d="M21.9 29.3 L29.4 32.2 L20.6 21.3 Z" fill="#eebb84" /><path d="M14.2 58.0 C14.5 55.0 13.4 42.3 16.0 40.0 C18.6 37.7 25.2 44.7 30.0 44.0 C34.8 43.3 40.3 38.7 45.0 36.0 C49.7 33.3 55.8 24.3 58.0 28.0 C60.2 31.7 65.3 53.0 58.0 58.0 C50.7 63.0 21.5 58.0 14.2 58.0" fill="url(#grain)"/><path d="M30 52 Q44 44 58 32 V52 Z" fill="#1a1a1a" opacity="0.55"/></svg></div><div class="a" style="left:1841px;top:1087px;width:58px;height:52px;background:#d3d3d3;overflow:hidden"><svg width="58" height="58" viewBox="0 0 58 58" style="display:block"><path d="M45 8.8 L58 0" stroke="#8a8a78" stroke-width="14" stroke-linecap="butt" /><path d="M35.7 29.4 L50.3 13.6 L40.1 4.0 L25.4 19.8 Z" fill="#c8b460" /><path d="M33.44016848315667 24.562873414840926 L46.73947542179161 10.228291085773327" stroke="#ffffff" stroke-width="2.1" stroke-linecap="butt" opacity="0.25"/><path d="M28.5 26.8 L35.7 29.4 L25.4 19.8 Z" fill="#d8c470" /><circle cx="23.4" cy="29.3" r="1.5" fill="#d8c060"/><path d="M20.8 58.0 C21.0 55.0 19.5 42.7 22.0 40.0 C24.5 37.3 30.0 42.3 36.0 42.0 C42.0 41.7 54.3 35.3 58.0 38.0 C61.7 40.7 64.2 54.7 58.0 58.0 C51.8 61.3 27.0 58.0 20.8 58.0" fill="url(#grain)"/><path d="M38 52 Q44 44 58 40 V52 Z" fill="#1a1a1a" opacity="0.75"/></svg></div><div class="a" style="left:1905px;top:787px;width:13px;height:351px;background:#3e3e3e;"></div><div class="a" style="left:1905px;top:787px;width:13px;height:14px;background:#414141;border:1px solid #555"></div><svg class="a" style="left:1907px;top:791px" width="10" height="7" viewBox="0 0 10 7"><path fill="#8f8f8f" d="M1 6 L5 1 L9 6 Z"/></svg><div class="a" style="left:1905px;top:801px;width:13px;height:211px;background:#454545;border:1px solid #555"></div><div class="a" style="left:1905px;top:1125px;width:13px;height:13px;background:#414141;border:1px solid #555"></div><svg class="a" style="left:1907px;top:1128px" width="10" height="7" viewBox="0 0 10 7"><path fill="#8f8f8f" d="M1 1 L5 6 L9 1 Z"/></svg><div class="a" style="left:1659px;top:1141px;width:160px;height:23px;border-radius:3px;background:#3c3c3c;border:1px solid #393939"></div><div class="tx" style="left:1662.00px;top:1145.15px;font-size:14px;color:#8c8c8c;font-weight:400;transform:scaleX(0.9017);">Search</div><div class="a" style="left:1826px;top:1146px;width:12px;height:12px;background:#3a3a3a;border-radius:2px"></div><svg class="a" style="left:1828px;top:1148px" width="8" height="9" viewBox="0 0 8 9"><path fill="none" stroke="#d5d5d5" stroke-width="1.3" d="M1 4 L3.5 8 L7 0"/></svg><div class="tx" style="left:1845.00px;top:1145.15px;font-size:14px;color:#d4d4d4;font-weight:400;transform:scaleX(0.9291);">Filter in Tag</div></body></html>
